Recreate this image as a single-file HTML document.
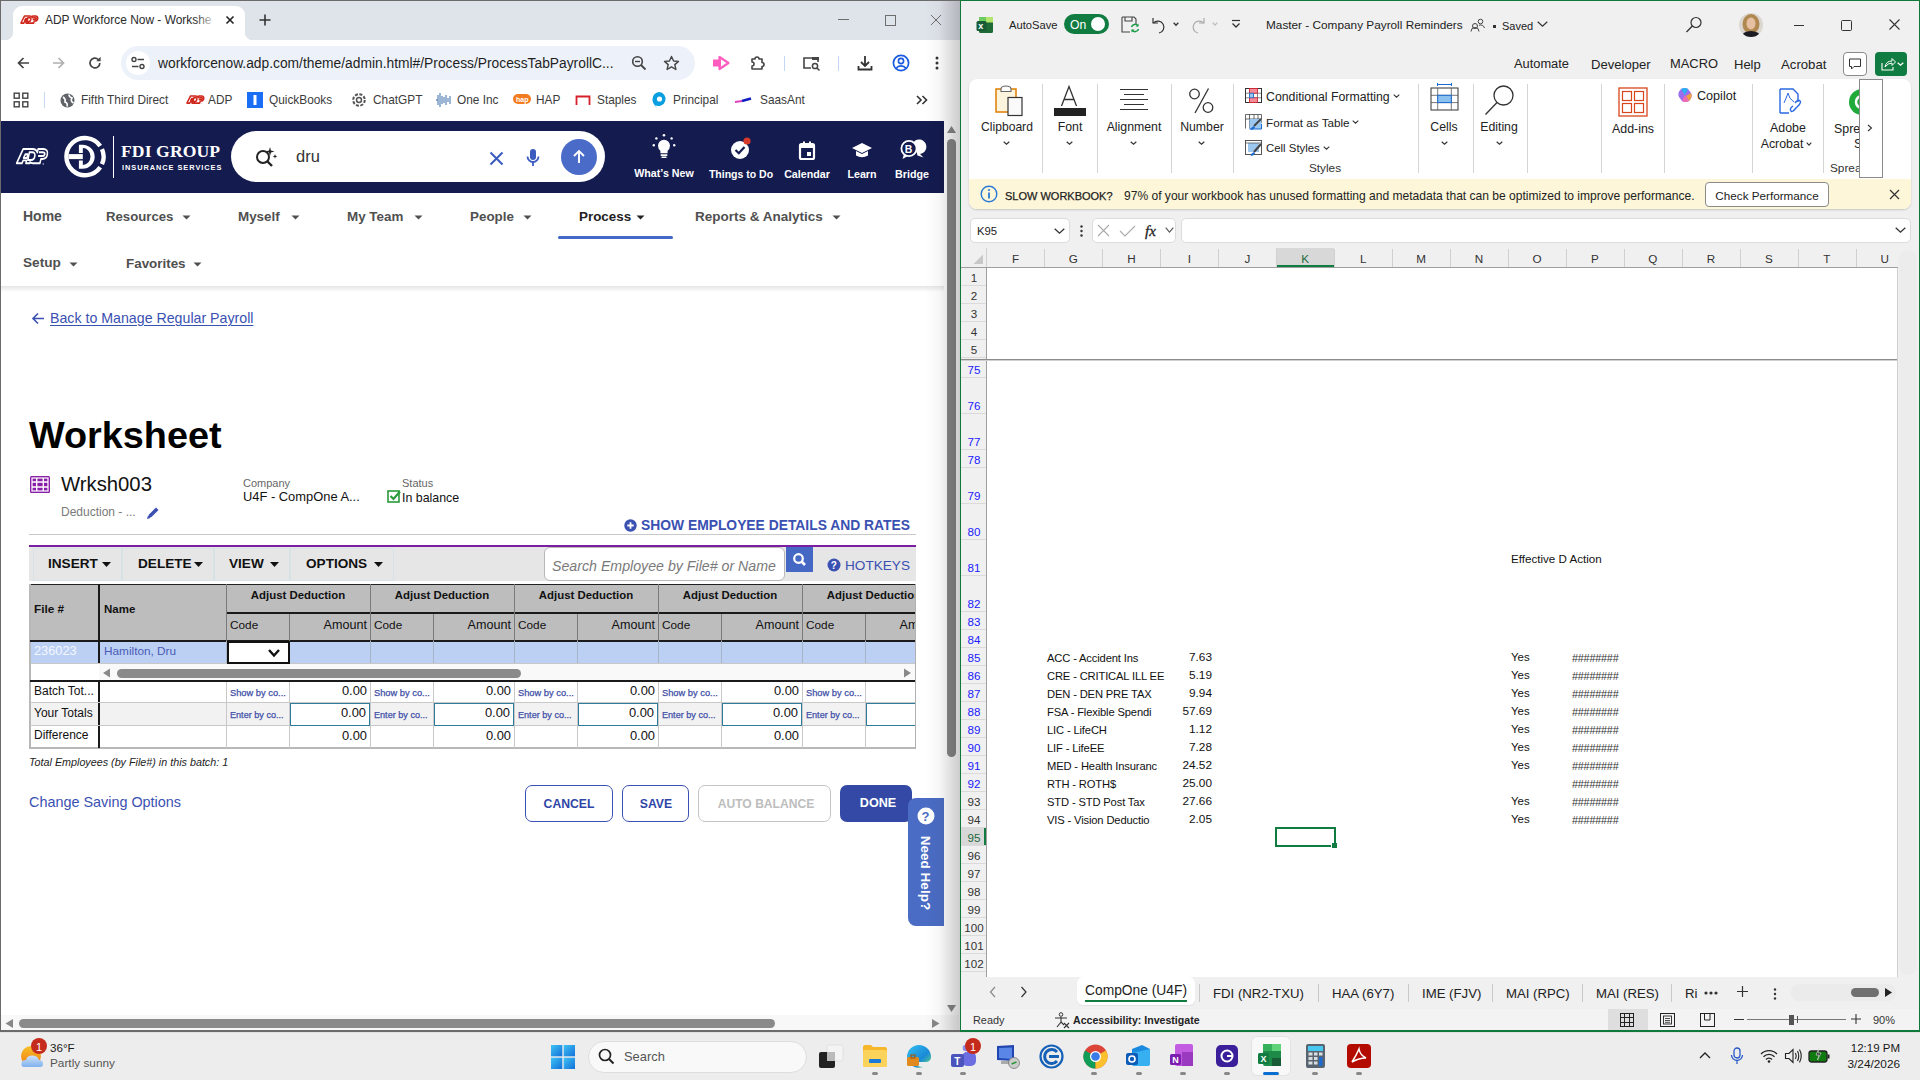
<!DOCTYPE html>
<html><head><meta charset="utf-8"><title>Screen</title>
<style>
html,body{margin:0;padding:0;width:1920px;height:1080px;overflow:hidden;background:#ededed;font-family:"Liberation Sans",sans-serif;}
.r{position:absolute;}
.t{position:absolute;white-space:nowrap;line-height:1;}
svg.r{overflow:visible;}
</style></head><body>
<div class="r" style="left:0px;top:0px;width:960px;height:1032px;background:#ffffff;"></div>
<div class="r" style="left:0px;top:0px;width:960px;height:40px;background:#dfe3ea;"></div>
<div class="r" style="left:13px;top:6px;width:232px;height:34px;background:#fff;border-radius:9px 9px 0 0"></div>
<div class="r" style="left:5px;top:32px;width:8px;height:8px;background:radial-gradient(circle at 0 0, transparent 8px, #fff 8.5px)"></div>
<div class="r" style="left:245px;top:32px;width:8px;height:8px;background:radial-gradient(circle at 100% 0, transparent 8px, #fff 8.5px)"></div>
<svg class="r" style="left:20px;top:15px;transform:scale(0.45,0.5);transform-origin:0 0" width="36" height="19" viewBox="0 0 36 19"><g stroke="#d0271d" stroke-width="3.2" fill="none" stroke-linejoin="round"><path d="M2 16.2 L10 2 H21.5 C24.8 2 26.6 3.6 27.2 5.6 L28.2 2 H34.5 C38.5 2 40 4 39.5 7.2 C39 10.4 36.6 12 33.2 12 H31.6 L30.4 16.2 H21.8 C19.6 16.2 18.8 15.7 18.3 15 L18 16.2 H13.3 L14 13.4 H10 L8.5 16.2 Z"/><path d="M10.5 11 L12.6 7.2 H15.6 L14.6 11 Z"/><path d="M17.6 5.2 H21 C23.6 5.2 24.6 6.8 24.2 9 C23.8 11.4 22.2 13 19.6 13 H15.6 Z"/><path d="M29.2 5.2 H33.6 C35.8 5.2 36.6 6 36.3 7.2 C36 8.4 35 9 33.4 9 H28.2"/></g><circle cx="34.4" cy="17" r="0.7" fill="#d0271d"/></svg>
<div class="t " style="left:45.0px;top:14.8px;font-size:11.95px;color:#2a2a2a;">ADP Workforce Now - Workshe</div>
<div class="r" style="left:195px;top:10px;width:22px;height:22px;background:linear-gradient(to right, rgba(255,255,255,0), #fff)"></div>
<svg class="r" style="left:224px;top:14px;" width="12" height="12" viewBox="0 0 12 12"><path d="M2.5 2.5 L9.5 9.5 M9.5 2.5 L2.5 9.5" stroke="#222" stroke-width="1.6"/></svg>
<svg class="r" style="left:258px;top:13px;" width="14" height="14" viewBox="0 0 14 14"><path d="M7 1.5 V12.5 M1.5 7 H12.5" stroke="#333" stroke-width="1.6"/></svg>
<div class="r" style="left:838px;top:19px;width:11px;height:1px;background:#6e6e6e;"></div>
<div class="r" style="left:885px;top:15px;width:9px;height:9px;border:1px solid #6e6e6e"></div>
<svg class="r" style="left:930px;top:14px;" width="12" height="12" viewBox="0 0 12 12"><path d="M1 1 L11 11 M11 1 L1 11" stroke="#6e6e6e" stroke-width="1"/></svg>
<div class="r" style="left:0px;top:40px;width:960px;height:40px;background:#ffffff;"></div>
<svg class="r" style="left:16px;top:56px;" width="14" height="14" viewBox="0 0 14 14"><path d="M13 7 H2.5 M7.5 2 L2.5 7 L7.5 12" stroke="#444" stroke-width="1.7" fill="none"/></svg>
<svg class="r" style="left:52px;top:56px;" width="14" height="14" viewBox="0 0 14 14"><path d="M1 7 H11.5 M6.5 2 L11.5 7 L6.5 12" stroke="#b0b0b0" stroke-width="1.7" fill="none"/></svg>
<svg class="r" style="left:88px;top:56px;" width="14" height="14" viewBox="0 0 14 14"><path d="M11.8 7 A4.9 4.9 0 1 1 10.3 3.5" stroke="#444" stroke-width="1.7" fill="none"/><path d="M12.6 0.8 V5.2 H8.2 Z" fill="#444"/></svg>
<div class="r" style="left:121px;top:46px;width:574px;height:34px;background:#edf2fa;border-radius:17px"></div>
<div class="r" style="left:126px;top:51px;width:24px;height:24px;background:#fff;border-radius:12px"></div>
<svg class="r" style="left:130px;top:55px;" width="16" height="16" viewBox="0 0 16 16"><circle cx="4" cy="4.5" r="2" stroke="#444" stroke-width="1.4" fill="none"/><path d="M7.5 4.5 H14" stroke="#444" stroke-width="1.5"/><circle cx="12" cy="11.5" r="2" stroke="#444" stroke-width="1.4" fill="none"/><path d="M2 11.5 H8.5" stroke="#444" stroke-width="1.5"/></svg>
<div class="t " style="left:158.0px;top:57.3px;font-size:13.8px;color:#1f1f1f;">workforcenow.adp.com/theme/admin.html#/Process/ProcessTabPayrollC...</div>
<svg class="r" style="left:631px;top:55px;" width="16" height="16" viewBox="0 0 16 16"><circle cx="6.5" cy="6.5" r="4.8" stroke="#444" stroke-width="1.6" fill="none"/><path d="M10 10 L14.5 14.5" stroke="#444" stroke-width="1.8"/><path d="M4 6.5 H9" stroke="#444" stroke-width="1.4"/></svg>
<svg class="r" style="left:663px;top:55px;" width="17" height="16" viewBox="0 0 17 16"><path d="M8.5 1.5 L10.6 6 L15.5 6.4 L11.8 9.6 L12.9 14.5 L8.5 11.9 L4.1 14.5 L5.2 9.6 L1.5 6.4 L6.4 6 Z" stroke="#444" stroke-width="1.4" fill="none" stroke-linejoin="round"/></svg>
<svg class="r" style="left:712px;top:55px;" width="18" height="16" viewBox="0 0 18 16"><rect x="1" y="4.5" width="8" height="7" fill="#ff5cc0"/><path d="M7.5 2 L16.5 8 L7.5 14 Z" stroke="#ff5cc0" stroke-width="2.2" fill="none" stroke-linejoin="round"/></svg>
<svg class="r" style="left:749px;top:55px;" width="17" height="17" viewBox="0 0 17 17"><path d="M3 4 H6 A2 2 0 0 1 10 4 H13 V7.5 A2 2 0 0 1 13 11.5 V14 H3 V11 A2 2 0 0 0 3 7 Z" stroke="#444" stroke-width="1.6" fill="none" stroke-linejoin="round"/></svg>
<div class="r" style="left:784px;top:56px;width:1px;height:15px;background:#c5d6f5;"></div>
<svg class="r" style="left:802px;top:55px;" width="19" height="17" viewBox="0 0 19 17"><path d="M9 13 H2 V3 H16 V7" stroke="#444" stroke-width="1.6" fill="none"/><rect x="10" y="2" width="7" height="3" fill="#444"/><circle cx="13" cy="11" r="2.6" stroke="#444" stroke-width="1.5" fill="none"/><path d="M15 13 L17.5 15.5" stroke="#444" stroke-width="1.6"/></svg>
<div class="r" style="left:838px;top:56px;width:1px;height:15px;background:#c5d6f5;"></div>
<svg class="r" style="left:856px;top:54px;" width="18" height="18" viewBox="0 0 18 18"><path d="M9 2 V11.5 M5 8 L9 12 L13 8" stroke="#333" stroke-width="1.8" fill="none"/><path d="M2.5 12 V15.5 H15.5 V12" stroke="#333" stroke-width="1.8" fill="none"/></svg>
<svg class="r" style="left:892px;top:54px;" width="18" height="18" viewBox="0 0 18 18"><circle cx="9" cy="9" r="7.6" stroke="#1a5ae0" stroke-width="1.7" fill="none"/><circle cx="9" cy="7" r="2.6" stroke="#1a5ae0" stroke-width="1.6" fill="none"/><path d="M4.2 14.2 A5.5 4.5 0 0 1 13.8 14.2" stroke="#1a5ae0" stroke-width="1.6" fill="none"/></svg>
<svg class="r" style="left:934px;top:55px;" width="6" height="16" viewBox="0 0 6 16"><circle cx="3" cy="3" r="1.5" fill="#333"/><circle cx="3" cy="8" r="1.5" fill="#333"/><circle cx="3" cy="13" r="1.5" fill="#333"/></svg>
<div class="r" style="left:0px;top:80px;width:960px;height:41px;background:#ffffff;"></div>
<svg class="r" style="left:13px;top:92px;" width="16" height="16" viewBox="0 0 16 16"><rect x="1.2" y="1.2" width="5" height="5" stroke="#444" stroke-width="1.4" fill="none"/><rect x="9.8" y="1.2" width="5" height="5" stroke="#444" stroke-width="1.4" fill="none"/><rect x="1.2" y="9.8" width="5" height="5" stroke="#444" stroke-width="1.4" fill="none"/><rect x="9.8" y="9.8" width="5" height="5" stroke="#444" stroke-width="1.4" fill="none"/></svg>
<div class="r" style="left:44px;top:92px;width:1px;height:16px;background:#c8d8f5;"></div>
<svg class="r" style="left:60px;top:93px;" width="15" height="15" viewBox="0 0 15 15"><circle cx="7.5" cy="7.5" r="7" fill="#5f6368"/><path d="M3 4 Q6 6 5 9 Q8 10 7 13.5 M9 1.5 Q9 4 12 5 Q10 8 13.5 10" stroke="#fff" stroke-width="1.6" fill="none"/></svg>
<div class="t " style="left:81.0px;top:94.9px;font-size:11.85px;color:#3c3c3c;">Fifth Third Direct</div>
<svg class="r" style="left:186px;top:95px;transform:scale(0.45,0.5);transform-origin:0 0" width="36" height="19" viewBox="0 0 36 19"><g stroke="#d0271d" stroke-width="3.2" fill="none" stroke-linejoin="round"><path d="M2 16.2 L10 2 H21.5 C24.8 2 26.6 3.6 27.2 5.6 L28.2 2 H34.5 C38.5 2 40 4 39.5 7.2 C39 10.4 36.6 12 33.2 12 H31.6 L30.4 16.2 H21.8 C19.6 16.2 18.8 15.7 18.3 15 L18 16.2 H13.3 L14 13.4 H10 L8.5 16.2 Z"/><path d="M10.5 11 L12.6 7.2 H15.6 L14.6 11 Z"/><path d="M17.6 5.2 H21 C23.6 5.2 24.6 6.8 24.2 9 C23.8 11.4 22.2 13 19.6 13 H15.6 Z"/><path d="M29.2 5.2 H33.6 C35.8 5.2 36.6 6 36.3 7.2 C36 8.4 35 9 33.4 9 H28.2"/></g><circle cx="34.4" cy="17" r="0.7" fill="#d0271d"/></svg>
<div class="t " style="left:208.0px;top:94.9px;font-size:11.85px;color:#3c3c3c;">ADP</div>
<svg class="r" style="left:247px;top:92px;" width="16" height="16" viewBox="0 0 16 16"><rect x="0" y="0" width="16" height="16" fill="#1a6ef5"/><rect x="6.5" y="3" width="3" height="10" fill="#fff"/></svg>
<div class="t " style="left:269.0px;top:94.9px;font-size:11.85px;color:#3c3c3c;">QuickBooks</div>
<svg class="r" style="left:352px;top:93px;" width="14" height="14" viewBox="0 0 14 14"><circle cx="7" cy="7" r="5.8" stroke="#555" stroke-width="2" fill="none" stroke-dasharray="3 1.5"/><circle cx="7" cy="7" r="2.5" stroke="#555" stroke-width="1.5" fill="none"/></svg>
<div class="t " style="left:373.0px;top:94.9px;font-size:11.85px;color:#3c3c3c;">ChatGPT</div>
<svg class="r" style="left:435px;top:91px;" width="16" height="18" viewBox="0 0 16 18"><path d="M1 9 H3 M3 4 V14 M5 2 V16 M7 5 V13 M9 6 V12 M11 4 V14 M13 7 V11 M15 5 V13" stroke="#6a8fc0" stroke-width="1.3"/></svg>
<div class="t " style="left:457.0px;top:94.9px;font-size:11.85px;color:#3c3c3c;">One Inc</div>
<svg class="r" style="left:513px;top:94px;" width="18" height="10" viewBox="0 0 18 10"><rect x="0" y="0" width="18" height="10" rx="5" fill="#f47c20"/><text x="3" y="8" font-family="Liberation Sans" font-weight="700" font-size="7" fill="#fff">hap</text></svg>
<div class="t " style="left:536.0px;top:94.9px;font-size:11.85px;color:#3c3c3c;">HAP</div>
<svg class="r" style="left:575px;top:95px;" width="16" height="10" viewBox="0 0 16 10"><path d="M1.5 10 V1.5 H14.5 V10" stroke="#d6202a" stroke-width="1.8" fill="none"/></svg>
<div class="t " style="left:597.0px;top:94.9px;font-size:11.85px;color:#3c3c3c;">Staples</div>
<svg class="r" style="left:651px;top:91px;" width="16" height="18" viewBox="0 0 16 18"><path d="M8 1 A7 7 0 1 1 4 14 L6 17 Q1 12 1.5 8 A7 7 0 0 1 8 1 Z" fill="#0a9fe0"/><circle cx="8.5" cy="8" r="2.6" fill="#fff"/></svg>
<div class="t " style="left:673.0px;top:94.9px;font-size:11.85px;color:#3c3c3c;">Principal</div>
<svg class="r" style="left:734px;top:95px;" width="18" height="10" viewBox="0 0 18 10"><path d="M1 7 L8 6" stroke="#e040c0" stroke-width="2.2"/><path d="M8 6 L17 3.5" stroke="#1020c0" stroke-width="2.6"/></svg>
<div class="t " style="left:760.0px;top:94.9px;font-size:11.85px;color:#3c3c3c;">SaasAnt</div>
<svg class="r" style="left:915px;top:94px;" width="14" height="12" viewBox="0 0 14 12"><path d="M2 2 L6 6 L2 10 M7.5 2 L11.5 6 L7.5 10" stroke="#333" stroke-width="1.6" fill="none"/></svg>
<div class="r" style="left:1px;top:121px;width:943px;height:72px;background:#131b4f;"></div>
<svg class="r" style="left:15px;top:147px;transform:scale(0.82,1.0);transform-origin:0 0" width="36" height="19" viewBox="0 0 36 19"><g stroke="#fff" stroke-width="1.9" fill="none" stroke-linejoin="round"><path d="M2 16.2 L10 2 H21.5 C24.8 2 26.6 3.6 27.2 5.6 L28.2 2 H34.5 C38.5 2 40 4 39.5 7.2 C39 10.4 36.6 12 33.2 12 H31.6 L30.4 16.2 H21.8 C19.6 16.2 18.8 15.7 18.3 15 L18 16.2 H13.3 L14 13.4 H10 L8.5 16.2 Z"/><path d="M10.5 11 L12.6 7.2 H15.6 L14.6 11 Z"/><path d="M17.6 5.2 H21 C23.6 5.2 24.6 6.8 24.2 9 C23.8 11.4 22.2 13 19.6 13 H15.6 Z"/><path d="M29.2 5.2 H33.6 C35.8 5.2 36.6 6 36.3 7.2 C36 8.4 35 9 33.4 9 H28.2"/></g><circle cx="34.4" cy="17" r="0.7" fill="#fff"/></svg>
<svg class="r" style="left:62px;top:134px;" width="48" height="46" viewBox="0 0 48 46"><path d="M38.24 11.93 A18.6 18.6 0 1 0 38.24 33.27" stroke="#fff" stroke-width="4.4" fill="none"/><path d="M39.99 15.03 A18.6 18.6 0 0 1 39.99 30.17" stroke="#fff" stroke-width="4.4" fill="none"/><path fill-rule="evenodd" fill="#fff" d="M16.9 10.7 H20.5 A12.2 12.05 0 0 1 20.5 34.8 H16.9 V26.4 H20.8 V31 A7.7 8.5 0 0 0 20.8 14 V18.9 H16.9 Z"/><rect x="6.6" y="20.1" width="14.2" height="5" fill="#fff"/></svg>
<div class="r" style="left:113px;top:136px;width:1px;height:42px;background:#ffffff;"></div>
<div class="t " style="left:121.0px;top:142.5px;font-size:17.6px;color:#fff;font-weight:700;font-family:'Liberation Serif',serif;letter-spacing:0.1px;">FDI GROUP</div>
<div class="t " style="left:122.0px;top:164.2px;font-size:7.4px;color:#fff;font-weight:700;letter-spacing:0.95px;">INSURANCE SERVICES</div>
<div class="r" style="left:231px;top:131px;width:374px;height:51px;background:#fff;border-radius:26px"></div>
<svg class="r" style="left:254px;top:145px;" width="24" height="24" viewBox="0 0 24 24"><circle cx="9" cy="12" r="6" stroke="#222" stroke-width="2" fill="none"/><path d="M13.5 16.5 L18 21" stroke="#222" stroke-width="2.4"/><path d="M16 2 L17 5.5 L20.5 6.5 L17 7.5 L16 11 L15 7.5 L11.5 6.5 L15 5.5 Z" fill="#222"/><path d="M21 9 L21.6 10.8 L23.4 11.4 L21.6 12 L21 13.8 L20.4 12 L18.6 11.4 L20.4 10.8 Z" fill="#222"/></svg>
<div class="t " style="left:296.0px;top:148.0px;font-size:16.5px;color:#333;">dru</div>
<svg class="r" style="left:489px;top:151px;" width="15" height="15" viewBox="0 0 15 15"><path d="M1.5 1.5 L13.5 13.5 M13.5 1.5 L1.5 13.5" stroke="#3b5bbf" stroke-width="2"/></svg>
<svg class="r" style="left:526px;top:148px;" width="14" height="20" viewBox="0 0 14 20"><rect x="4" y="1" width="6" height="11" rx="3" fill="#3b5bbf"/><path d="M1.5 8.5 A5.5 5.5 0 0 0 12.5 8.5" stroke="#3b5bbf" stroke-width="1.8" fill="none"/><path d="M7 14 V18" stroke="#3b5bbf" stroke-width="1.8"/></svg>
<div class="r" style="left:561px;top:139px;width:36px;height:36px;background:#4a6bc8;border-radius:18px"></div>
<svg class="r" style="left:570px;top:148px;" width="18" height="18" viewBox="0 0 18 18"><path d="M9 15 V3.5 M4 8 L9 3 L14 8" stroke="#fff" stroke-width="1.9" fill="none"/></svg>
<svg class="r" style="left:651px;top:133px;" width="26" height="26" viewBox="0 0 26 26"><path d="M7 12.8 A6 6 0 1 1 19 12.8 Q19 15.8 16.6 17.8 V20.2 H9.4 V17.8 Q7 15.8 7 12.8 Z" fill="#fff"/><rect x="9.6" y="21.2" width="6.8" height="1.8" rx="0.6" fill="#fff"/><rect x="10.4" y="23.6" width="5.2" height="1.5" rx="0.7" fill="#fff"/><circle cx="13" cy="2.3" r="1.3" fill="#fff"/><circle cx="5.4" cy="5.4" r="1.2" fill="#fff"/><circle cx="20.6" cy="5.4" r="1.2" fill="#fff"/><circle cx="2.8" cy="12.3" r="1.2" fill="#fff"/><circle cx="23.2" cy="12.3" r="1.2" fill="#fff"/></svg>
<div class="t " style="left:364.0px;width:600px;text-align:center;top:167.9px;font-size:10.7px;color:#fff;font-weight:700;">What’s New</div>
<svg class="r" style="left:728px;top:136px;" width="26" height="26" viewBox="0 0 26 26"><circle cx="12" cy="14" r="9" fill="#fff"/><path d="M7.5 14 L10.8 17.2 L16.5 11" stroke="#131b4f" stroke-width="2.2" fill="none"/><circle cx="19" cy="5" r="3.6" fill="#d63a2a" stroke="#131b4f" stroke-width="0"/></svg>
<div class="t " style="left:441.0px;width:600px;text-align:center;top:169.1px;font-size:10.5px;color:#fff;font-weight:700;">Things to Do</div>
<svg class="r" style="left:797px;top:141px;" width="20" height="20" viewBox="0 0 20 20"><rect x="3" y="3" width="14" height="15" rx="1.5" stroke="#fff" stroke-width="2.2" fill="none"/><rect x="3" y="3" width="14" height="4" fill="#fff"/><rect x="6" y="0.5" width="2" height="4" fill="#fff"/><rect x="12" y="0.5" width="2" height="4" fill="#fff"/><rect x="10" y="11" width="4" height="4" fill="#fff"/></svg>
<div class="t " style="left:507.0px;width:600px;text-align:center;top:168.9px;font-size:10.7px;color:#fff;font-weight:700;">Calendar</div>
<svg class="r" style="left:850px;top:140px;" width="24" height="20" viewBox="0 0 24 20"><path d="M12 3 L22 8 L12 13 L2 8 Z" fill="#fff"/><path d="M6 11 V15.5 Q12 19 18 15.5 V11 L12 14 Z" fill="#fff"/></svg>
<div class="t " style="left:562.0px;width:600px;text-align:center;top:168.9px;font-size:10.7px;color:#fff;font-weight:700;">Learn</div>
<svg class="r" style="left:899px;top:139px;" width="26" height="22" viewBox="0 0 26 22"><path d="M15 2.5 A7.3 7.3 0 1 1 21 15 L24.5 18.5 L18.5 16.5 Z" fill="#fff"/><circle cx="10" cy="9.5" r="7.6" stroke="#fff" stroke-width="1.8" fill="#131b4f"/><path d="M5 15 L3.5 20 L9 17" fill="#fff"/><text x="5.8" y="13.5" font-family="Liberation Sans" font-weight="700" font-size="10.5" fill="#fff">B</text></svg>
<div class="t " style="left:612.0px;width:600px;text-align:center;top:168.9px;font-size:10.7px;color:#fff;font-weight:700;">Bridge</div>
<div class="t " style="left:23.0px;top:209.1px;font-size:14.0px;color:#505050;font-weight:700;">Home</div>
<div class="t " style="left:106.0px;top:209.8px;font-size:13.2px;color:#505050;font-weight:700;">Resources</div>
<svg class="r" style="left:182px;top:215px;" width="9" height="5" viewBox="0 0 9 5"><path d="M0.5 0.5 H8.5 L4.5 4.5 Z" fill="#505050"/></svg>
<div class="t " style="left:238.0px;top:209.6px;font-size:13.4px;color:#505050;font-weight:700;">Myself</div>
<svg class="r" style="left:291px;top:215px;" width="9" height="5" viewBox="0 0 9 5"><path d="M0.5 0.5 H8.5 L4.5 4.5 Z" fill="#505050"/></svg>
<div class="t " style="left:347.0px;top:209.6px;font-size:13.4px;color:#505050;font-weight:700;">My Team</div>
<svg class="r" style="left:414px;top:215px;" width="9" height="5" viewBox="0 0 9 5"><path d="M0.5 0.5 H8.5 L4.5 4.5 Z" fill="#505050"/></svg>
<div class="t " style="left:470.0px;top:209.6px;font-size:13.4px;color:#505050;font-weight:700;">People</div>
<svg class="r" style="left:523px;top:215px;" width="9" height="5" viewBox="0 0 9 5"><path d="M0.5 0.5 H8.5 L4.5 4.5 Z" fill="#505050"/></svg>
<div class="t " style="left:579.0px;top:209.6px;font-size:13.4px;color:#222;font-weight:700;">Process</div>
<svg class="r" style="left:636px;top:215px;" width="9" height="5" viewBox="0 0 9 5"><path d="M0.5 0.5 H8.5 L4.5 4.5 Z" fill="#222"/></svg>
<div class="t " style="left:695.0px;top:209.5px;font-size:13.5px;color:#505050;font-weight:700;">Reports &amp; Analytics</div>
<svg class="r" style="left:832px;top:215px;" width="9" height="5" viewBox="0 0 9 5"><path d="M0.5 0.5 H8.5 L4.5 4.5 Z" fill="#505050"/></svg>
<div class="r" style="left:558px;top:236px;width:115px;height:3px;background:#4368c8;border-radius:2px"></div>
<div class="t " style="left:23.0px;top:256.4px;font-size:13.6px;color:#505050;font-weight:700;">Setup</div>
<svg class="r" style="left:69px;top:262px;" width="9" height="5" viewBox="0 0 9 5"><path d="M0.5 0.5 H8.5 L4.5 4.5 Z" fill="#505050"/></svg>
<div class="t " style="left:126.0px;top:256.6px;font-size:13.4px;color:#505050;font-weight:700;">Favorites</div>
<svg class="r" style="left:193px;top:262px;" width="9" height="5" viewBox="0 0 9 5"><path d="M0.5 0.5 H8.5 L4.5 4.5 Z" fill="#505050"/></svg>
<div class="r" style="left:1px;top:286px;width:943px;height:6px;background:linear-gradient(rgba(0,0,0,0.10), rgba(0,0,0,0))"></div>
<svg class="r" style="left:31px;top:312px;" width="14" height="13" viewBox="0 0 14 13"><path d="M13 6.5 H2 M7 1.5 L2 6.5 L7 11.5" stroke="#3a51b2" stroke-width="1.6" fill="none"/></svg>
<div class="t " style="left:50.0px;top:310.9px;font-size:14.2px;color:#3a51b2;text-decoration:underline;text-underline-offset:2px;text-decoration-thickness:1px;">Back to Manage Regular Payroll</div>
<div class="t " style="left:29.0px;top:416.9px;font-size:37.8px;color:#000;font-weight:700;">Worksheet</div>
<svg class="r" style="left:29px;top:475px;" width="22" height="19" viewBox="0 0 22 19"><rect x="1" y="1" width="20" height="17" rx="1.5" fill="#8a1fa8"/><path d="M3 7 H19 M3 12 H19 M7.7 3 V16 M14.3 3 V16" stroke="#fff" stroke-width="1.4"/><rect x="3" y="3" width="16" height="13" stroke="#fff" stroke-width="1.2" fill="none"/></svg>
<div class="t " style="left:61.0px;top:473.7px;font-size:20.3px;color:#111;">Wrksh003</div>
<div class="t " style="left:61.0px;top:505.8px;font-size:12.0px;color:#7a7a7a;">Deduction - ...</div>
<svg class="r" style="left:146px;top:506px;" width="14" height="14" viewBox="0 0 14 14"><path d="M2 12 L3 8.5 L10 1.5 L12.5 4 L5.5 11 Z" fill="#3a51b2"/><path d="M1 13 L2 9.5 L4.5 12 Z" fill="#3a51b2"/></svg>
<div class="t " style="left:243.0px;top:477.6px;font-size:11.0px;color:#666;">Company</div>
<div class="t " style="left:243.0px;top:491.0px;font-size:12.9px;color:#111;">U4F - CompOne A...</div>
<div class="t " style="left:402.0px;top:477.6px;font-size:11.0px;color:#666;">Status</div>
<svg class="r" style="left:387px;top:489px;" width="14" height="14" viewBox="0 0 14 14"><rect x="1" y="2" width="11" height="11" stroke="#2a9a3a" stroke-width="1.6" fill="none"/><path d="M3.5 7 L6.5 10 L13 2.5" stroke="#2a9a3a" stroke-width="2.2" fill="none"/></svg>
<div class="t " style="left:402.0px;top:491.5px;font-size:12.4px;color:#111;">In balance</div>
<svg class="r" style="left:624px;top:519px;" width="13" height="13" viewBox="0 0 13 13"><circle cx="6.5" cy="6.5" r="6.2" fill="#3a51b2"/><path d="M6.5 3.3 V9.7 M3.3 6.5 H9.7" stroke="#fff" stroke-width="1.8"/></svg>
<div class="t " style="left:641.0px;top:519.2px;font-size:13.85px;color:#3a51b2;font-weight:700;">SHOW EMPLOYEE DETAILS AND RATES</div>
<div class="r" style="left:29px;top:534px;width:887px;height:1px;background:#c8c8c8;"></div>
<div class="r" style="left:29px;top:545px;width:887px;height:2px;background:#7b1fa2;"></div>
<div class="r" style="left:29px;top:547px;width:887px;height:34px;background:#e6e6e6;"></div>
<div class="r" style="left:33px;top:548px;width:87px;height:31px;border:1px solid #d6e2e6"></div>
<div class="r" style="left:122px;top:548px;width:90px;height:31px;border:1px solid #d6e2e6"></div>
<div class="r" style="left:214px;top:548px;width:74px;height:31px;border:1px solid #d6e2e6"></div>
<div class="r" style="left:290px;top:548px;width:102px;height:31px;border:1px solid #d6e2e6"></div>
<div class="t " style="left:48.0px;top:557.4px;font-size:13.6px;color:#111;font-weight:700;">INSERT</div>
<svg class="r" style="left:102px;top:562px;" width="9" height="5" viewBox="0 0 9 5"><path d="M0 0 H9 L4.5 5 Z" fill="#111"/></svg>
<div class="t " style="left:138.0px;top:557.4px;font-size:13.6px;color:#111;font-weight:700;">DELETE</div>
<svg class="r" style="left:194px;top:562px;" width="9" height="5" viewBox="0 0 9 5"><path d="M0 0 H9 L4.5 5 Z" fill="#111"/></svg>
<div class="t " style="left:229.0px;top:557.4px;font-size:13.6px;color:#111;font-weight:700;">VIEW</div>
<svg class="r" style="left:270px;top:562px;" width="9" height="5" viewBox="0 0 9 5"><path d="M0 0 H9 L4.5 5 Z" fill="#111"/></svg>
<div class="t " style="left:306.0px;top:557.4px;font-size:13.6px;color:#111;font-weight:700;">OPTIONS</div>
<svg class="r" style="left:374px;top:562px;" width="9" height="5" viewBox="0 0 9 5"><path d="M0 0 H9 L4.5 5 Z" fill="#111"/></svg>
<div class="r" style="left:544px;top:547px;width:241px;height:34px;background:#fff;border:1px solid #b8b8b8;border-radius:6px;box-sizing:border-box"></div>
<div class="t " style="left:552.0px;top:558.9px;font-size:14.2px;color:#7a7a7a;font-style:italic;">Search Employee by File# or Name</div>
<div class="r" style="left:786px;top:547px;width:27px;height:25px;background:#4668c5;"></div>
<svg class="r" style="left:792px;top:552px;" width="16" height="16" viewBox="0 0 16 16"><circle cx="6.5" cy="6.5" r="4.3" stroke="#fff" stroke-width="2.2" fill="none"/><path d="M9.5 9.5 L13 13" stroke="#fff" stroke-width="2.6"/></svg>
<svg class="r" style="left:827px;top:558px;" width="14" height="14" viewBox="0 0 14 14"><circle cx="7" cy="7" r="6.5" fill="#3a51b2"/><text x="3.8" y="11" font-family="Liberation Sans" font-weight="700" font-size="10" fill="#fff">?</text></svg>
<div class="t " style="left:845.0px;top:559.4px;font-size:13.6px;color:#3a51b2;">HOTKEYS</div>
<div style="position:absolute;left:0;top:0;width:916px;height:1080px;overflow:hidden">
<div class="r" style="left:30px;top:584px;width:886px;height:57px;background:#bdbdbd;"></div>
<div class="r" style="left:30px;top:584px;width:886px;height:1px;background:#222;"></div>
<div class="r" style="left:30px;top:641px;width:886px;height:23px;background:#bcd0f4;"></div>
<div class="r" style="left:30px;top:664px;width:886px;height:17px;background:#ffffff;"></div>
<div class="r" style="left:99px;top:664px;width:817px;height:17px;background:#f9f9f9;"></div>
<div class="r" style="left:30px;top:682px;width:886px;height:21px;background:#ffffff;"></div>
<div class="r" style="left:30px;top:703px;width:886px;height:23px;background:#f2f2f2;"></div>
<div class="r" style="left:30px;top:726px;width:886px;height:22px;background:#ffffff;"></div>
<div class="r" style="left:29px;top:584px;width:2px;height:165px;background:#b8b8b8;"></div>
<div class="r" style="left:29px;top:747px;width:887px;height:2px;background:#b8b8b8;"></div>
<div class="r" style="left:98px;top:584px;width:2px;height:80px;background:#1a1a1a;"></div>
<div class="r" style="left:98px;top:682px;width:2px;height:66px;background:#1a1a1a;"></div>
<div class="r" style="left:226px;top:584px;width:1px;height:57px;background:#8a8a8a;"></div>
<div class="r" style="left:226px;top:612px;width:690px;height:2px;background:#1a1a1a;"></div>
<div class="r" style="left:30px;top:640px;width:886px;height:2px;background:#1a1a1a;"></div>
<div class="r" style="left:30px;top:680px;width:886px;height:2px;background:#1a1a1a;"></div>
<div class="r" style="left:30px;top:702px;width:886px;height:1px;background:#c8c8c8;"></div>
<div class="r" style="left:30px;top:725px;width:886px;height:1px;background:#c8c8c8;"></div>
<div class="r" style="left:30px;top:663px;width:886px;height:1px;background:#c8c8c8;"></div>
<div class="r" style="left:226px;top:584px;width:1px;height:57px;background:#7a7a7a;"></div>
<div class="r" style="left:289px;top:614px;width:1px;height:27px;background:#7a7a7a;"></div>
<div class="r" style="left:226px;top:641px;width:1px;height:22px;background:#a8b4c8;"></div>
<div class="r" style="left:289px;top:641px;width:1px;height:22px;background:#a8b4c8;"></div>
<div class="r" style="left:226px;top:682px;width:1px;height:66px;background:#c8c8c8;"></div>
<div class="r" style="left:289px;top:682px;width:1px;height:66px;background:#c8c8c8;"></div>
<div class="t " style="left:-2.0px;width:600px;text-align:center;top:590.3px;font-size:11.4px;color:#111;font-weight:700;">Adjust Deduction</div>
<div class="t " style="left:230.0px;top:620.0px;font-size:11.8px;color:#111;">Code</div>
<div class="t " style="left:-233.0px;width:600px;text-align:right;top:619.3px;font-size:12.6px;color:#111;">Amount</div>
<div class="t " style="left:230.0px;top:688.6px;font-size:9.3px;color:#4150a8;-webkit-text-stroke:0.25px #4150a8;">Show by co...</div>
<div class="t " style="left:230.0px;top:711.3px;font-size:9.1px;color:#4150a8;-webkit-text-stroke:0.25px #4150a8;">Enter by co...</div>
<div class="t " style="left:-233.0px;width:600px;text-align:right;top:685.0px;font-size:12.9px;color:#111;">0.00</div>
<div class="t " style="left:-233.0px;width:600px;text-align:right;top:730.0px;font-size:12.9px;color:#111;">0.00</div>
<div class="r" style="left:290px;top:703px;width:80px;height:23px;border:1.5px solid #2f7d9a;box-sizing:border-box;background:#fff"></div>
<div class="t " style="left:-234.0px;width:600px;text-align:right;top:706.5px;font-size:12.9px;color:#111;">0.00</div>
<div class="r" style="left:370px;top:584px;width:1px;height:57px;background:#7a7a7a;"></div>
<div class="r" style="left:433px;top:614px;width:1px;height:27px;background:#7a7a7a;"></div>
<div class="r" style="left:370px;top:641px;width:1px;height:22px;background:#a8b4c8;"></div>
<div class="r" style="left:433px;top:641px;width:1px;height:22px;background:#a8b4c8;"></div>
<div class="r" style="left:370px;top:682px;width:1px;height:66px;background:#c8c8c8;"></div>
<div class="r" style="left:433px;top:682px;width:1px;height:66px;background:#c8c8c8;"></div>
<div class="t " style="left:142.0px;width:600px;text-align:center;top:590.3px;font-size:11.4px;color:#111;font-weight:700;">Adjust Deduction</div>
<div class="t " style="left:374.0px;top:620.0px;font-size:11.8px;color:#111;">Code</div>
<div class="t " style="left:-89.0px;width:600px;text-align:right;top:619.3px;font-size:12.6px;color:#111;">Amount</div>
<div class="t " style="left:374.0px;top:688.6px;font-size:9.3px;color:#4150a8;-webkit-text-stroke:0.25px #4150a8;">Show by co...</div>
<div class="t " style="left:374.0px;top:711.3px;font-size:9.1px;color:#4150a8;-webkit-text-stroke:0.25px #4150a8;">Enter by co...</div>
<div class="t " style="left:-89.0px;width:600px;text-align:right;top:685.0px;font-size:12.9px;color:#111;">0.00</div>
<div class="t " style="left:-89.0px;width:600px;text-align:right;top:730.0px;font-size:12.9px;color:#111;">0.00</div>
<div class="r" style="left:434px;top:703px;width:80px;height:23px;border:1.5px solid #2f7d9a;box-sizing:border-box;background:#fff"></div>
<div class="t " style="left:-90.0px;width:600px;text-align:right;top:706.5px;font-size:12.9px;color:#111;">0.00</div>
<div class="r" style="left:514px;top:584px;width:1px;height:57px;background:#7a7a7a;"></div>
<div class="r" style="left:577px;top:614px;width:1px;height:27px;background:#7a7a7a;"></div>
<div class="r" style="left:514px;top:641px;width:1px;height:22px;background:#a8b4c8;"></div>
<div class="r" style="left:577px;top:641px;width:1px;height:22px;background:#a8b4c8;"></div>
<div class="r" style="left:514px;top:682px;width:1px;height:66px;background:#c8c8c8;"></div>
<div class="r" style="left:577px;top:682px;width:1px;height:66px;background:#c8c8c8;"></div>
<div class="t " style="left:286.0px;width:600px;text-align:center;top:590.3px;font-size:11.4px;color:#111;font-weight:700;">Adjust Deduction</div>
<div class="t " style="left:518.0px;top:620.0px;font-size:11.8px;color:#111;">Code</div>
<div class="t " style="left:55.0px;width:600px;text-align:right;top:619.3px;font-size:12.6px;color:#111;">Amount</div>
<div class="t " style="left:518.0px;top:688.6px;font-size:9.3px;color:#4150a8;-webkit-text-stroke:0.25px #4150a8;">Show by co...</div>
<div class="t " style="left:518.0px;top:711.3px;font-size:9.1px;color:#4150a8;-webkit-text-stroke:0.25px #4150a8;">Enter by co...</div>
<div class="t " style="left:55.0px;width:600px;text-align:right;top:685.0px;font-size:12.9px;color:#111;">0.00</div>
<div class="t " style="left:55.0px;width:600px;text-align:right;top:730.0px;font-size:12.9px;color:#111;">0.00</div>
<div class="r" style="left:578px;top:703px;width:80px;height:23px;border:1.5px solid #2f7d9a;box-sizing:border-box;background:#fff"></div>
<div class="t " style="left:54.0px;width:600px;text-align:right;top:706.5px;font-size:12.9px;color:#111;">0.00</div>
<div class="r" style="left:658px;top:584px;width:1px;height:57px;background:#7a7a7a;"></div>
<div class="r" style="left:721px;top:614px;width:1px;height:27px;background:#7a7a7a;"></div>
<div class="r" style="left:658px;top:641px;width:1px;height:22px;background:#a8b4c8;"></div>
<div class="r" style="left:721px;top:641px;width:1px;height:22px;background:#a8b4c8;"></div>
<div class="r" style="left:658px;top:682px;width:1px;height:66px;background:#c8c8c8;"></div>
<div class="r" style="left:721px;top:682px;width:1px;height:66px;background:#c8c8c8;"></div>
<div class="t " style="left:430.0px;width:600px;text-align:center;top:590.3px;font-size:11.4px;color:#111;font-weight:700;">Adjust Deduction</div>
<div class="t " style="left:662.0px;top:620.0px;font-size:11.8px;color:#111;">Code</div>
<div class="t " style="left:199.0px;width:600px;text-align:right;top:619.3px;font-size:12.6px;color:#111;">Amount</div>
<div class="t " style="left:662.0px;top:688.6px;font-size:9.3px;color:#4150a8;-webkit-text-stroke:0.25px #4150a8;">Show by co...</div>
<div class="t " style="left:662.0px;top:711.3px;font-size:9.1px;color:#4150a8;-webkit-text-stroke:0.25px #4150a8;">Enter by co...</div>
<div class="t " style="left:199.0px;width:600px;text-align:right;top:685.0px;font-size:12.9px;color:#111;">0.00</div>
<div class="t " style="left:199.0px;width:600px;text-align:right;top:730.0px;font-size:12.9px;color:#111;">0.00</div>
<div class="r" style="left:722px;top:703px;width:80px;height:23px;border:1.5px solid #2f7d9a;box-sizing:border-box;background:#fff"></div>
<div class="t " style="left:198.0px;width:600px;text-align:right;top:706.5px;font-size:12.9px;color:#111;">0.00</div>
<div class="r" style="left:802px;top:584px;width:1px;height:57px;background:#7a7a7a;"></div>
<div class="r" style="left:865px;top:614px;width:1px;height:27px;background:#7a7a7a;"></div>
<div class="r" style="left:802px;top:641px;width:1px;height:22px;background:#a8b4c8;"></div>
<div class="r" style="left:865px;top:641px;width:1px;height:22px;background:#a8b4c8;"></div>
<div class="r" style="left:802px;top:682px;width:1px;height:66px;background:#c8c8c8;"></div>
<div class="r" style="left:865px;top:682px;width:1px;height:66px;background:#c8c8c8;"></div>
<div class="t " style="left:574.0px;width:600px;text-align:center;top:590.3px;font-size:11.4px;color:#111;font-weight:700;">Adjust Deduction</div>
<div class="t " style="left:806.0px;top:620.0px;font-size:11.8px;color:#111;">Code</div>
<div class="t " style="left:343.0px;width:600px;text-align:right;top:619.3px;font-size:12.6px;color:#111;">Amount</div>
<div class="t " style="left:806.0px;top:688.6px;font-size:9.3px;color:#4150a8;-webkit-text-stroke:0.25px #4150a8;">Show by co...</div>
<div class="t " style="left:806.0px;top:711.3px;font-size:9.1px;color:#4150a8;-webkit-text-stroke:0.25px #4150a8;">Enter by co...</div>
<div class="r" style="left:866px;top:703px;width:80px;height:23px;border:1.5px solid #2f7d9a;box-sizing:border-box;background:#fff"></div>
<div class="t " style="left:34.0px;top:604.0px;font-size:11.8px;color:#111;font-weight:700;">File #</div>
<div class="t " style="left:104.0px;top:604.2px;font-size:11.5px;color:#111;font-weight:700;">Name</div>
<div class="t " style="left:34.0px;top:644.6px;font-size:12.8px;color:#f4f7ff;">236023</div>
<div class="t " style="left:104.0px;top:645.5px;font-size:11.8px;color:#4a5cb6;">Hamilton, Dru</div>
<div class="r" style="left:227px;top:641px;width:63px;height:23px;background:#fff;border:2px solid #111;box-sizing:border-box"></div>
<svg class="r" style="left:267px;top:648px;" width="14" height="10" viewBox="0 0 14 10"><path d="M2 2 L7 7.5 L12 2" stroke="#111" stroke-width="2.4" fill="none"/></svg>
<svg class="r" style="left:102px;top:668px;" width="9" height="10" viewBox="0 0 9 10"><path d="M8 0.5 V9.5 L1 5 Z" fill="#888"/></svg>
<div class="r" style="left:117px;top:669px;width:404px;height:9px;background:#8a8a8a;border-radius:5px"></div>
<svg class="r" style="left:903px;top:668px;" width="9" height="10" viewBox="0 0 9 10"><path d="M1 0.5 V9.5 L8 5 Z" fill="#888"/></svg>
<div class="t " style="left:34.0px;top:684.8px;font-size:12.0px;color:#111;">Batch Tot...</div>
<div class="t " style="left:34.0px;top:706.8px;font-size:12.0px;color:#111;">Your Totals</div>
<div class="t " style="left:34.0px;top:729.3px;font-size:12.0px;color:#111;">Difference</div>
<div class="r" style="left:915px;top:584px;width:1px;height:165px;background:#b0b0b0;"></div>
</div>
<div class="t " style="left:29.0px;top:756.9px;font-size:10.75px;color:#222;font-style:italic;">Total Employees (by File#) in this batch: 1</div>
<div class="t " style="left:29.0px;top:794.8px;font-size:14.4px;color:#3a51b2;">Change Saving Options</div>
<div class="r" style="left:525px;top:785px;width:88px;height:37px;border:1.5px solid #3a51b2;border-radius:7px;box-sizing:border-box;background:#fff"></div>
<div class="t " style="left:269.0px;width:600px;text-align:center;top:797.6px;font-size:12.2px;color:#2f46a8;font-weight:700;">CANCEL</div>
<div class="r" style="left:622px;top:785px;width:67px;height:37px;border:1.5px solid #3a51b2;border-radius:7px;box-sizing:border-box;background:#fff"></div>
<div class="t " style="left:356.0px;width:600px;text-align:center;top:797.6px;font-size:12.2px;color:#2f46a8;font-weight:700;">SAVE</div>
<div class="r" style="left:698px;top:785px;width:133px;height:37px;border:1.5px solid #c4c4c4;border-radius:7px;box-sizing:border-box;background:#fff"></div>
<div class="t " style="left:466.0px;width:600px;text-align:center;top:797.7px;font-size:12.1px;color:#bdbdbd;font-weight:700;">AUTO BALANCE</div>
<div class="r" style="left:840px;top:785px;width:72px;height:37px;background:#3349a5;border-radius:7px"></div>
<div class="t " style="left:578.0px;width:600px;text-align:center;top:797.3px;font-size:12.6px;color:#fff;font-weight:700;">DONE</div>
<div class="r" style="left:908px;top:798px;width:36px;height:128px;background:#4a6cc4;border-radius:8px 0 0 8px"></div>
<svg class="r" style="left:917px;top:807px;" width="18" height="18" viewBox="0 0 18 18"><circle cx="9" cy="9" r="8.5" fill="#fff"/><text x="4.6" y="14" font-family="Liberation Sans" font-weight="700" font-size="13" fill="#4a6cc4">?</text></svg>
<div class="t" style="left:873px;top:865px;width:104px;height:16px;line-height:16px;font-size:13.5px;font-weight:700;color:#fff;text-align:center;transform:rotate(90deg)">Need Help?</div>
<div class="r" style="left:944px;top:121px;width:15px;height:895px;background:#ffffff;"></div>
<svg class="r" style="left:946px;top:125px;" width="11" height="9" viewBox="0 0 11 9"><path d="M5.5 1 L10 8 H1 Z" fill="#888"/></svg>
<div class="r" style="left:947px;top:139px;width:9px;height:618px;background:#888;border-radius:5px"></div>
<svg class="r" style="left:946px;top:1004px;" width="11" height="9" viewBox="0 0 11 9"><path d="M1 1 H10 L5.5 8 Z" fill="#888"/></svg>
<div class="r" style="left:1px;top:1015px;width:958px;height:16px;background:#f8f8f8;"></div>
<svg class="r" style="left:4px;top:1018px;" width="10" height="11" viewBox="0 0 10 11"><path d="M9 1 V10 L1.5 5.5 Z" fill="#888"/></svg>
<div class="r" style="left:19px;top:1019px;width:756px;height:9px;background:#8a8a8a;border-radius:5px"></div>
<svg class="r" style="left:931px;top:1018px;" width="10" height="11" viewBox="0 0 10 11"><path d="M1 1 V10 L8.5 5.5 Z" fill="#888"/></svg>
<div class="r" style="left:925px;top:0px;width:35px;height:1031px;background:linear-gradient(to right, rgba(0,0,0,0), rgba(0,0,0,0.03) 40%, rgba(0,0,0,0.20))"></div>
<div class="r" style="left:0px;top:0px;width:960px;height:1px;background:#6b6b6b;"></div>
<div class="r" style="left:0px;top:0px;width:1px;height:1031px;background:#6b6b6b;"></div>
<div class="r" style="left:0px;top:1030px;width:960px;height:2px;background:#6b6b6b;"></div>
<div class="r" style="left:960px;top:0px;width:960px;height:1032px;background:#f0f0f0;"></div>
<svg class="r" style="left:976px;top:16px;" width="17" height="18" viewBox="0 0 17 18"><rect x="3" y="1" width="14" height="16" rx="1.5" fill="#1f6b35"/><rect x="10" y="1" width="7" height="5.5" fill="#b4e66e"/><rect x="3" y="1" width="7" height="5.5" fill="#6ccc60"/><rect x="0.5" y="5" width="10" height="10" rx="1.5" fill="#185c37"/><text x="2.2" y="13.3" font-family="Liberation Sans" font-weight="700" font-size="9" fill="#fff">x</text></svg>
<div class="t " style="left:1009.0px;top:19.5px;font-size:11.2px;color:#222;">AutoSave</div>
<div class="r" style="left:1064px;top:14px;width:45px;height:20px;background:#107c41;border-radius:10px"></div>
<div class="t " style="left:1070.0px;top:19.1px;font-size:12.2px;color:#fff;">On</div>
<div class="r" style="left:1091px;top:17px;width:14px;height:14px;background:#fff;border-radius:7px"></div>
<svg class="r" style="left:1121px;top:16px;" width="19" height="18" viewBox="0 0 19 18"><path d="M1 1 H13 L15 3 V8 M9 16 H1 V1" stroke="#444" stroke-width="1.1" fill="none"/><path d="M4 1 V5 H11 V1" stroke="#444" stroke-width="1.1" fill="none"/><path d="M10.5 11 A3.6 3.6 0 0 1 17 10 M17.5 13 A3.6 3.6 0 0 1 11 14" stroke="#1f9a4a" stroke-width="1.5" fill="none"/><path d="M17.5 7.5 V10.5 H14.5 Z M10.5 16.5 V13.5 H13.5 Z" fill="#1f9a4a"/></svg>
<svg class="r" style="left:1151px;top:16px;" width="16" height="18" viewBox="0 0 16 18"><path d="M2 2 V7 H7" stroke="#333" stroke-width="1.2" fill="none"/><path d="M2.5 7 A6 6 0 1 1 8 17" stroke="#333" stroke-width="1.2" fill="none"/></svg>
<svg class="r" style="left:1173px;top:22px;" width="6" height="4" viewBox="0 0 6 4"><path d="M0.7 0.7 L3.0 3.2 L5.3 0.7" stroke="#333" stroke-width="1.3" fill="none"/></svg>
<svg class="r" style="left:1190px;top:16px;" width="16" height="18" viewBox="0 0 16 18"><path d="M14 2 V7 H9" stroke="#aaa" stroke-width="1.2" fill="none"/><path d="M13.5 7 A6 6 0 1 0 8 17" stroke="#aaa" stroke-width="1.2" fill="none"/></svg>
<svg class="r" style="left:1212px;top:22px;" width="6" height="4" viewBox="0 0 6 4"><path d="M0.7 0.7 L3.0 3.2 L5.3 0.7" stroke="#bbb" stroke-width="1.2" fill="none"/></svg>
<svg class="r" style="left:1231px;top:19px;" width="10" height="10" viewBox="0 0 10 10"><path d="M1 1.5 H9" stroke="#333" stroke-width="1.2"/><path d="M1.5 4.5 L5 8 L8.5 4.5" stroke="#333" stroke-width="1.3" fill="none"/></svg>
<div class="t " style="left:1266.0px;top:20.0px;font-size:11.8px;color:#222;">Master - Company Payroll Reminders</div>
<svg class="r" style="left:1470px;top:18px;" width="15" height="14" viewBox="0 0 15 14"><circle cx="5" cy="8" r="2.5" stroke="#444" stroke-width="1" fill="none"/><path d="M1 13.5 A4 4 0 0 1 9 13.5" stroke="#444" stroke-width="1" fill="none"/><circle cx="10.5" cy="3.5" r="2.3" stroke="#444" stroke-width="1" fill="none"/><path d="M9 7.3 A4 4 0 0 1 14.5 10" stroke="#444" stroke-width="1" fill="none"/></svg>
<div class="r" style="left:1493px;top:25px;width:3px;height:3px;background:#333;"></div>
<div class="t " style="left:1502.0px;top:20.6px;font-size:11.0px;color:#222;">Saved</div>
<svg class="r" style="left:1537px;top:21px;" width="11" height="6" viewBox="0 0 11 6"><path d="M0.7 0.7 L5.5 5.2 L10.3 0.7" stroke="#333" stroke-width="1.2" fill="none"/></svg>
<svg class="r" style="left:1685px;top:16px;" width="18" height="18" viewBox="0 0 18 18"><circle cx="11" cy="6.5" r="5" stroke="#333" stroke-width="1.2" fill="none"/><path d="M7.3 10 L1.5 16" stroke="#333" stroke-width="1.3"/></svg>
<svg class="r" style="left:1738px;top:12px;" width="26" height="26" viewBox="0 0 26 26"><defs><clipPath id="av"><circle cx="13" cy="13" r="12"/></clipPath></defs><g clip-path="url(#av)"><rect width="26" height="26" fill="#dcd6d0"/><ellipse cx="13" cy="12" rx="8.5" ry="10" fill="#b08850"/><ellipse cx="13" cy="11.5" rx="4.5" ry="6" fill="#e6c0a0"/><path d="M2 27 Q4 19 13 19 Q22 19 24 27 Z" fill="#1c1c24"/></g></svg>
<div class="r" style="left:1794px;top:25px;width:10px;height:1px;background:#333;"></div>
<div class="r" style="left:1841px;top:20px;width:9px;height:9px;border:1.1px solid #333;border-radius:1.5px"></div>
<svg class="r" style="left:1889px;top:19px;" width="11" height="11" viewBox="0 0 11 11"><path d="M0.5 0.5 L10.5 10.5 M10.5 0.5 L0.5 10.5" stroke="#333" stroke-width="1.1"/></svg>
<div class="t " style="left:1514.0px;top:58.1px;font-size:12.85px;color:#222;">Automate</div>
<div class="t " style="left:1591.0px;top:57.9px;font-size:13.1px;color:#222;">Developer</div>
<div class="t " style="left:1670.0px;top:58.0px;font-size:12.9px;color:#222;">MACRO</div>
<div class="t " style="left:1734.0px;top:58.0px;font-size:13.0px;color:#222;">Help</div>
<div class="t " style="left:1781.0px;top:57.8px;font-size:13.2px;color:#222;">Acrobat</div>
<div class="r" style="left:1843px;top:52px;width:24px;height:24px;border:1px solid #8a8a8a;border-radius:4px;box-sizing:border-box;background:#fff"></div>
<svg class="r" style="left:1848px;top:57px;" width="14" height="14" viewBox="0 0 14 14"><path d="M1.5 2 H12.5 V9.5 H6 L3.5 12 V9.5 H1.5 Z" stroke="#333" stroke-width="1" fill="none"/></svg>
<div class="r" style="left:1875px;top:52px;width:32px;height:24px;background:#107c41;border-radius:4px"></div>
<svg class="r" style="left:1880px;top:56px;" width="16" height="16" viewBox="0 0 16 16"><path d="M2 7 V14 H13 V11" stroke="#fff" stroke-width="1.1" fill="none"/><path d="M5 11 Q6 5 12 5 V2.5 L15.5 6 L12 9.5 V7 Q8 7 5 11 Z" stroke="#fff" stroke-width="1" fill="none"/></svg>
<svg class="r" style="left:1897px;top:62px;" width="7" height="4" viewBox="0 0 7 4"><path d="M0.7 0.7 L3.5 3.2 L6.3 0.7" stroke="#fff" stroke-width="1.3" fill="none"/></svg>
<div class="r" style="left:969px;top:79px;width:942px;height:130px;background:#fff;border-radius:8px;box-shadow:0 1px 2px rgba(0,0,0,0.18)"></div>
<div class="r" style="left:969px;top:179px;width:942px;height:30px;background:#fdf6d8;border-radius:0 0 8px 8px"></div>
<div class="r" style="left:1042px;top:84px;width:1px;height:89px;background:#d4d4d4;"></div>
<div class="r" style="left:1097px;top:84px;width:1px;height:89px;background:#d4d4d4;"></div>
<div class="r" style="left:1171px;top:84px;width:1px;height:89px;background:#d4d4d4;"></div>
<div class="r" style="left:1233px;top:84px;width:1px;height:89px;background:#d4d4d4;"></div>
<div class="r" style="left:1418px;top:84px;width:1px;height:89px;background:#d4d4d4;"></div>
<div class="r" style="left:1473px;top:84px;width:1px;height:89px;background:#d4d4d4;"></div>
<div class="r" style="left:1527px;top:84px;width:1px;height:89px;background:#d4d4d4;"></div>
<div class="r" style="left:1601px;top:84px;width:1px;height:89px;background:#d4d4d4;"></div>
<div class="r" style="left:1664px;top:84px;width:1px;height:89px;background:#d4d4d4;"></div>
<div class="r" style="left:1752px;top:84px;width:1px;height:89px;background:#d4d4d4;"></div>
<div class="r" style="left:1823px;top:84px;width:1px;height:89px;background:#d4d4d4;"></div>
<svg class="r" style="left:995px;top:85px;" width="30" height="33" viewBox="0 0 30 33"><rect x="1" y="4" width="20" height="23" fill="#fdf4dd" stroke="#e07c00" stroke-width="1.5"/><path d="M6 4 Q6 1 11 1 Q16 1 16 4 V6.5 H6 Z" fill="#fff" stroke="#666" stroke-width="1.1"/><rect x="13" y="12.5" width="14" height="18" fill="#fafafa" stroke="#333" stroke-width="1.2"/></svg>
<div class="t " style="left:707.0px;width:600px;text-align:center;top:120.7px;font-size:12.1px;color:#222;">Clipboard</div>
<svg class="r" style="left:1003px;top:141px;" width="7" height="4" viewBox="0 0 7 4"><path d="M0.7 0.7 L3.5 3.2 L6.3 0.7" stroke="#333" stroke-width="1.2" fill="none"/></svg>
<svg class="r" style="left:1053px;top:85px;" width="33" height="32" viewBox="0 0 33 32"><path d="M8.5 21 L16 1.5 L23.5 21 M11 14.5 H21" stroke="#333" stroke-width="1.3" fill="none"/><rect x="1" y="23" width="32" height="8" fill="#222"/></svg>
<div class="t " style="left:770.0px;width:600px;text-align:center;top:120.5px;font-size:12.3px;color:#222;">Font</div>
<svg class="r" style="left:1066px;top:141px;" width="7" height="4" viewBox="0 0 7 4"><path d="M0.7 0.7 L3.5 3.2 L6.3 0.7" stroke="#333" stroke-width="1.2" fill="none"/></svg>
<svg class="r" style="left:1119px;top:88px;" width="30" height="25" viewBox="0 0 30 25"><path d="M1 1.5 H29 M5 6.5 H25 M1 11.5 H29 M5 16.5 H25 M1 21.5 H29" stroke="#333" stroke-width="1.1"/></svg>
<div class="t " style="left:834.0px;width:600px;text-align:center;top:120.5px;font-size:12.3px;color:#222;">Alignment</div>
<svg class="r" style="left:1130px;top:141px;" width="7" height="4" viewBox="0 0 7 4"><path d="M0.7 0.7 L3.5 3.2 L6.3 0.7" stroke="#333" stroke-width="1.2" fill="none"/></svg>
<svg class="r" style="left:1188px;top:87px;" width="27" height="28" viewBox="0 0 27 28"><circle cx="6.5" cy="7" r="4.8" stroke="#333" stroke-width="1.3" fill="none"/><circle cx="20" cy="20.5" r="4.8" stroke="#333" stroke-width="1.3" fill="none"/><path d="M20.5 1.5 L7 26" stroke="#333" stroke-width="1.3"/></svg>
<div class="t " style="left:902.0px;width:600px;text-align:center;top:120.5px;font-size:12.3px;color:#222;">Number</div>
<svg class="r" style="left:1198px;top:141px;" width="7" height="4" viewBox="0 0 7 4"><path d="M0.7 0.7 L3.5 3.2 L6.3 0.7" stroke="#333" stroke-width="1.2" fill="none"/></svg>
<svg class="r" style="left:1245px;top:88px;" width="18" height="16" viewBox="0 0 18 16"><rect x="0.5" y="0.5" width="16" height="14" stroke="#333" stroke-width="1" fill="#fff"/><path d="M0.5 5.2 H16.5 M0.5 9.8 H16.5 M4.5 0.5 V14.5 M8.5 0.5 V14.5 M12.5 0.5 V14.5" stroke="#555" stroke-width="0.7"/><rect x="4.5" y="0.5" width="8" height="4.7" fill="#f58c9a" stroke="#d8202a" stroke-width="0.8"/><rect x="4.5" y="9.8" width="8" height="4.7" fill="#f58c9a" stroke="#d8202a" stroke-width="0.8"/><rect x="4.5" y="5.2" width="4" height="4.6" fill="#9cc8f0" stroke="#1a6ad0" stroke-width="0.8"/></svg>
<div class="t " style="left:1266.0px;top:90.5px;font-size:12.3px;color:#222;">Conditional Formatting</div>
<svg class="r" style="left:1393px;top:94px;" width="7" height="4" viewBox="0 0 7 4"><path d="M0.7 0.7 L3.5 3.2 L6.3 0.7" stroke="#333" stroke-width="1.1" fill="none"/></svg>
<svg class="r" style="left:1245px;top:114px;" width="18" height="16" viewBox="0 0 18 16"><path d="M0.5 14.5 V0.5 H16.5 V9 M0.5 5 H16.5 M4.5 0.5 V14.5 M9 0.5 V9 M13 0.5 V9" stroke="#444" stroke-width="0.8" fill="none"/><rect x="4.5" y="5" width="12" height="10" fill="#9cc8f0"/><path d="M4.5 15 H16.5 V10" stroke="#1a6ad0" stroke-width="1" fill="none"/><path d="M16 5 L9 12" stroke="#444" stroke-width="2"/><path d="M9 12 Q6 13 5.5 16 Q8 16 10 13.5 Z" fill="#1a6ad0"/></svg>
<div class="t " style="left:1266.0px;top:117.1px;font-size:11.7px;color:#222;">Format as Table</div>
<svg class="r" style="left:1352px;top:120px;" width="7" height="4" viewBox="0 0 7 4"><path d="M0.7 0.7 L3.5 3.2 L6.3 0.7" stroke="#333" stroke-width="1.1" fill="none"/></svg>
<svg class="r" style="left:1245px;top:140px;" width="18" height="16" viewBox="0 0 18 16"><rect x="0.5" y="0.5" width="16" height="14" stroke="#444" stroke-width="0.9" fill="#fff"/><rect x="3" y="3" width="11" height="9" fill="#9cc8f0"/><path d="M0.5 3 H16.5" stroke="#444" stroke-width="0.7"/><path d="M16 4 L9 12" stroke="#444" stroke-width="2"/><path d="M9 12 Q6 13 5.5 16 Q8 16 10 13.5 Z" fill="#1a6ad0"/></svg>
<div class="t " style="left:1266.0px;top:143.3px;font-size:11.4px;color:#222;">Cell Styles</div>
<svg class="r" style="left:1323px;top:146px;" width="7" height="4" viewBox="0 0 7 4"><path d="M0.7 0.7 L3.5 3.2 L6.3 0.7" stroke="#333" stroke-width="1.1" fill="none"/></svg>
<div class="t " style="left:1025.0px;width:600px;text-align:center;top:163.0px;font-size:11.8px;color:#333;">Styles</div>
<svg class="r" style="left:1430px;top:83px;" width="30" height="30" viewBox="0 0 30 30"><path d="M7.5 1.5 H21.5 M7.5 0 V3 M21.5 0 V3" stroke="#1a6ad0" stroke-width="1"/><rect x="1" y="5" width="27" height="22" stroke="#333" stroke-width="1" fill="#fff"/><path d="M1 12.3 H28 M1 19.6 H28 M7.7 5 V27 M21.3 5 V27" stroke="#555" stroke-width="0.8"/><rect x="7.7" y="12.3" width="13.6" height="7.3" fill="#8cc0ee" stroke="#1a6ad0" stroke-width="1"/></svg>
<div class="t " style="left:1144.0px;width:600px;text-align:center;top:120.5px;font-size:12.3px;color:#222;">Cells</div>
<svg class="r" style="left:1441px;top:141px;" width="7" height="4" viewBox="0 0 7 4"><path d="M0.7 0.7 L3.5 3.2 L6.3 0.7" stroke="#333" stroke-width="1.2" fill="none"/></svg>
<svg class="r" style="left:1484px;top:85px;" width="32" height="32" viewBox="0 0 32 32"><circle cx="19.5" cy="10.5" r="9.5" stroke="#333" stroke-width="1.3" fill="none"/><path d="M13 17.5 L1.5 29.5" stroke="#333" stroke-width="1.3"/></svg>
<div class="t " style="left:1199.0px;width:600px;text-align:center;top:120.5px;font-size:12.3px;color:#222;">Editing</div>
<svg class="r" style="left:1496px;top:141px;" width="7" height="4" viewBox="0 0 7 4"><path d="M0.7 0.7 L3.5 3.2 L6.3 0.7" stroke="#333" stroke-width="1.2" fill="none"/></svg>
<svg class="r" style="left:1618px;top:87px;" width="30" height="30" viewBox="0 0 30 30"><rect x="1" y="1" width="28" height="28" stroke="#d9461c" stroke-width="1.3" fill="none"/><rect x="4.5" y="4.5" width="9" height="9" stroke="#d9461c" stroke-width="1.2" fill="none"/><rect x="16.5" y="4.5" width="9" height="9" stroke="#d9461c" stroke-width="1.2" fill="none"/><rect x="4.5" y="16.5" width="9" height="9" stroke="#d9461c" stroke-width="1.2" fill="none"/><rect x="16.5" y="16.5" width="9" height="9" stroke="#d9461c" stroke-width="1.2" fill="none"/></svg>
<div class="t " style="left:1333.0px;width:600px;text-align:center;top:122.5px;font-size:12.4px;color:#222;">Add-ins</div>
<svg class="r" style="left:1677px;top:87px;" width="16" height="16" viewBox="0 0 16 16"><path d="M4 2 Q8 0 11 2 L14 6 Q16 10 12 14 Q8 16 5 14 L2 10 Q0 6 4 2 Z" fill="#9a6cf0"/><path d="M4 2 Q8 0 11 2 L8 8 Z" fill="#2ab0f0"/><path d="M12 14 Q8 16 5 14 L8 8 Z" fill="#f06ab0"/><path d="M14 6 Q16 10 12 14 L9 9 Z" fill="#f0a040"/></svg>
<div class="t " style="left:1697.0px;top:90.3px;font-size:12.6px;color:#222;">Copilot</div>
<svg class="r" style="left:1778px;top:87px;" width="27" height="30" viewBox="0 0 27 30"><path d="M2 2 H15 L20 7 V15 M11 26 H2 Z" stroke="#2a6ae0" stroke-width="1.4" fill="none"/><path d="M2 2 V26" stroke="#2a6ae0" stroke-width="1.4"/><path d="M6 16 Q9 9 10 6 Q11 12 16 15" stroke="#2a6ae0" stroke-width="1" fill="none"/><path d="M15 24 L22 17 M18 21 Q14 26 13 24 Q11 22 15 19 M19 20 Q24 15 22 14 Q20 12 17 16" stroke="#2a6ae0" stroke-width="1.4" fill="none"/></svg>
<div class="t " style="left:1488.0px;width:600px;text-align:center;top:121.5px;font-size:12.4px;color:#222;">Adobe</div>
<div class="t " style="left:1482.0px;width:600px;text-align:center;top:137.5px;font-size:12.4px;color:#222;">Acrobat</div>
<svg class="r" style="left:1806px;top:142px;" width="6" height="4" viewBox="0 0 6 4"><path d="M0.7 0.7 L3.0 3.2 L5.3 0.7" stroke="#333" stroke-width="1.1" fill="none"/></svg>
<svg class="r" style="left:1848px;top:88px;" width="14" height="28" viewBox="0 0 14 28"><circle cx="14" cy="14" r="13" fill="#1faa3a"/><circle cx="14" cy="14" r="6" stroke="#fff" stroke-width="2.5" fill="none"/></svg>
<div class="t " style="left:1834.0px;top:122.5px;font-size:12.4px;color:#222;">Sprea</div>
<div class="t " style="left:1854.0px;top:137.5px;font-size:12.4px;color:#222;">S</div>
<div class="t " style="left:1830.0px;top:163.0px;font-size:11.8px;color:#333;">Sprea</div>
<div class="r" style="left:1859px;top:79px;width:24px;height:99px;background:#fff;border:1px solid #8a8a8a;box-sizing:border-box"></div>
<svg class="r" style="left:1867px;top:124px;" width="6" height="8" viewBox="0 0 6 8"><path d="M1 1 L4.5 4 L1 7" stroke="#333" stroke-width="1.1" fill="none"/></svg>
<svg class="r" style="left:980px;top:185px;" width="18" height="18" viewBox="0 0 18 18"><circle cx="9" cy="9" r="7.8" stroke="#2a7ad6" stroke-width="1.4" fill="none"/><rect x="8.1" y="7.5" width="1.8" height="6" fill="#2a7ad6"/><circle cx="9" cy="5" r="1.1" fill="#2a7ad6"/></svg>
<div class="t " style="left:1005.0px;top:190.7px;font-size:11.0px;color:#222;-webkit-text-stroke:0.25px #222;">SLOW WORKBOOK?</div>
<div class="t " style="left:1124.0px;top:189.8px;font-size:12.05px;color:#222;">97% of your workbook has unused formatting and metadata that can be optimized to improve performance.</div>
<div class="r" style="left:1705px;top:182px;width:124px;height:25px;background:#fff;border:1px solid #8a8a8a;border-radius:4px;box-sizing:border-box"></div>
<div class="t " style="left:1467.0px;width:600px;text-align:center;top:190.1px;font-size:11.7px;color:#222;">Check Performance</div>
<svg class="r" style="left:1889px;top:189px;" width="11" height="11" viewBox="0 0 11 11"><path d="M1 1 L10 10 M10 1 L1 10" stroke="#333" stroke-width="1.2"/></svg>
<div class="r" style="left:970px;top:218px;width:100px;height:25px;background:#fff;border:1px solid #dcdcdc;border-radius:5px;box-sizing:border-box"></div>
<div class="t " style="left:977.0px;top:226.4px;font-size:11.3px;color:#222;">K95</div>
<svg class="r" style="left:1054px;top:228px;" width="11" height="6" viewBox="0 0 11 6"><path d="M0.7 0.7 L5.5 5.2 L10.3 0.7" stroke="#333" stroke-width="1.3" fill="none"/></svg>
<svg class="r" style="left:1079px;top:225px;" width="5" height="12" viewBox="0 0 5 12"><circle cx="2.5" cy="1.5" r="1.2" fill="#333"/><circle cx="2.5" cy="6" r="1.2" fill="#333"/><circle cx="2.5" cy="10.5" r="1.2" fill="#333"/></svg>
<div class="r" style="left:1092px;top:218px;width:84px;height:25px;background:#fff;border:1px solid #dcdcdc;border-radius:5px;box-sizing:border-box"></div>
<svg class="r" style="left:1097px;top:224px;" width="13" height="13" viewBox="0 0 13 13"><path d="M1 1 L12 12 M12 1 L1 12" stroke="#aaa" stroke-width="1.1"/></svg>
<svg class="r" style="left:1119px;top:225px;" width="17" height="12" viewBox="0 0 17 12"><path d="M1 6 L6 11 L16 1" stroke="#aaa" stroke-width="1.1" fill="none"/></svg>
<div class="t " style="left:1145.0px;top:224.2px;font-size:15px;color:#222;font-style:italic;font-family:'Liberation Serif',serif;-webkit-text-stroke:0.3px #222;">fx</div>
<svg class="r" style="left:1165px;top:227px;" width="9" height="6" viewBox="0 0 9 6"><path d="M0.7 0.7 L4.5 5.2 L8.3 0.7" stroke="#555" stroke-width="1.1" fill="none"/></svg>
<div class="r" style="left:1181px;top:218px;width:730px;height:25px;background:#fff;border:1px solid #dcdcdc;border-radius:5px;box-sizing:border-box"></div>
<svg class="r" style="left:1895px;top:227px;" width="11" height="6" viewBox="0 0 11 6"><path d="M0.7 0.7 L5.5 5.2 L10.3 0.7" stroke="#333" stroke-width="1.3" fill="none"/></svg>
<div class="r" style="left:961px;top:248px;width:937px;height:20px;background:#f0f0f0;"></div>
<svg class="r" style="left:973px;top:254px;" width="11" height="11" viewBox="0 0 11 11"><path d="M10 0.5 V10 H0.5 Z" fill="#c8c8c8"/></svg>
<div class="r" style="left:986px;top:248px;width:1px;height:20px;background:#d0d0d0;"></div>
<div class="t " style="left:715.5px;width:600px;text-align:center;top:252.6px;font-size:11.7px;color:#333;">F</div>
<div class="r" style="left:1044px;top:249px;width:1px;height:18px;background:#d0d0d0;"></div>
<div class="t " style="left:773.4px;width:600px;text-align:center;top:252.6px;font-size:11.7px;color:#333;">G</div>
<div class="r" style="left:1102px;top:249px;width:1px;height:18px;background:#d0d0d0;"></div>
<div class="t " style="left:831.4px;width:600px;text-align:center;top:252.6px;font-size:11.7px;color:#333;">H</div>
<div class="r" style="left:1160px;top:249px;width:1px;height:18px;background:#d0d0d0;"></div>
<div class="t " style="left:889.3px;width:600px;text-align:center;top:252.6px;font-size:11.7px;color:#333;">I</div>
<div class="r" style="left:1218px;top:249px;width:1px;height:18px;background:#d0d0d0;"></div>
<div class="t " style="left:947.3px;width:600px;text-align:center;top:252.6px;font-size:11.7px;color:#333;">J</div>
<div class="r" style="left:1276px;top:248px;width:58px;height:20px;background:#d8d8d8;"></div>
<div class="r" style="left:1276px;top:265px;width:58px;height:2px;background:#107c41;"></div>
<div class="r" style="left:1276px;top:249px;width:1px;height:18px;background:#d0d0d0;"></div>
<div class="t " style="left:1005.2px;width:600px;text-align:center;top:252.6px;font-size:11.7px;color:#1e6b3c;">K</div>
<div class="r" style="left:1334px;top:249px;width:1px;height:18px;background:#d0d0d0;"></div>
<div class="t " style="left:1063.2px;width:600px;text-align:center;top:252.6px;font-size:11.7px;color:#333;">L</div>
<div class="r" style="left:1392px;top:249px;width:1px;height:18px;background:#d0d0d0;"></div>
<div class="t " style="left:1121.1px;width:600px;text-align:center;top:252.6px;font-size:11.7px;color:#333;">M</div>
<div class="r" style="left:1450px;top:249px;width:1px;height:18px;background:#d0d0d0;"></div>
<div class="t " style="left:1179.1px;width:600px;text-align:center;top:252.6px;font-size:11.7px;color:#333;">N</div>
<div class="r" style="left:1508px;top:249px;width:1px;height:18px;background:#d0d0d0;"></div>
<div class="t " style="left:1237.0px;width:600px;text-align:center;top:252.6px;font-size:11.7px;color:#333;">O</div>
<div class="r" style="left:1566px;top:249px;width:1px;height:18px;background:#d0d0d0;"></div>
<div class="t " style="left:1295.0px;width:600px;text-align:center;top:252.6px;font-size:11.7px;color:#333;">P</div>
<div class="r" style="left:1624px;top:249px;width:1px;height:18px;background:#d0d0d0;"></div>
<div class="t " style="left:1352.9px;width:600px;text-align:center;top:252.6px;font-size:11.7px;color:#333;">Q</div>
<div class="r" style="left:1682px;top:249px;width:1px;height:18px;background:#d0d0d0;"></div>
<div class="t " style="left:1410.9px;width:600px;text-align:center;top:252.6px;font-size:11.7px;color:#333;">R</div>
<div class="r" style="left:1740px;top:249px;width:1px;height:18px;background:#d0d0d0;"></div>
<div class="t " style="left:1468.8px;width:600px;text-align:center;top:252.6px;font-size:11.7px;color:#333;">S</div>
<div class="r" style="left:1798px;top:249px;width:1px;height:18px;background:#d0d0d0;"></div>
<div class="t " style="left:1526.8px;width:600px;text-align:center;top:252.6px;font-size:11.7px;color:#333;">T</div>
<div class="r" style="left:1856px;top:249px;width:1px;height:18px;background:#d0d0d0;"></div>
<div class="t " style="left:1584.7px;width:600px;text-align:center;top:252.6px;font-size:11.7px;color:#333;">U</div>
<div class="r" style="left:961px;top:267px;width:937px;height:1px;background:#9f9f9f;"></div>
<div class="r" style="left:987px;top:268px;width:911px;height:709px;background:#ffffff;"></div>
<div class="r" style="left:961px;top:268px;width:25px;height:709px;background:#f0f0f0;"></div>
<div class="r" style="left:986px;top:268px;width:1px;height:709px;background:#9f9f9f;"></div>
<div class="r" style="left:961px;top:285px;width:25px;height:1px;background:#dadada;"></div>
<div class="t " style="left:674.0px;width:600px;text-align:center;top:272.1px;font-size:11.6px;color:#333;">1</div>
<div class="r" style="left:961px;top:303px;width:25px;height:1px;background:#dadada;"></div>
<div class="t " style="left:674.0px;width:600px;text-align:center;top:290.1px;font-size:11.6px;color:#333;">2</div>
<div class="r" style="left:961px;top:321px;width:25px;height:1px;background:#dadada;"></div>
<div class="t " style="left:674.0px;width:600px;text-align:center;top:308.1px;font-size:11.6px;color:#333;">3</div>
<div class="r" style="left:961px;top:339px;width:25px;height:1px;background:#dadada;"></div>
<div class="t " style="left:674.0px;width:600px;text-align:center;top:326.1px;font-size:11.6px;color:#333;">4</div>
<div class="r" style="left:961px;top:357px;width:25px;height:1px;background:#dadada;"></div>
<div class="t " style="left:674.0px;width:600px;text-align:center;top:344.1px;font-size:11.6px;color:#333;">5</div>
<div class="r" style="left:961px;top:377px;width:25px;height:1px;background:#dadada;"></div>
<div class="t " style="left:674.0px;width:600px;text-align:center;top:364.1px;font-size:11.6px;color:#1a1aff;">75</div>
<div class="r" style="left:961px;top:413px;width:25px;height:1px;background:#dadada;"></div>
<div class="t " style="left:674.0px;width:600px;text-align:center;top:400.1px;font-size:11.6px;color:#1a1aff;">76</div>
<div class="r" style="left:961px;top:449px;width:25px;height:1px;background:#dadada;"></div>
<div class="t " style="left:674.0px;width:600px;text-align:center;top:436.1px;font-size:11.6px;color:#1a1aff;">77</div>
<div class="r" style="left:961px;top:467px;width:25px;height:1px;background:#dadada;"></div>
<div class="t " style="left:674.0px;width:600px;text-align:center;top:454.1px;font-size:11.6px;color:#1a1aff;">78</div>
<div class="r" style="left:961px;top:503px;width:25px;height:1px;background:#dadada;"></div>
<div class="t " style="left:674.0px;width:600px;text-align:center;top:490.1px;font-size:11.6px;color:#1a1aff;">79</div>
<div class="r" style="left:961px;top:539px;width:25px;height:1px;background:#dadada;"></div>
<div class="t " style="left:674.0px;width:600px;text-align:center;top:526.1px;font-size:11.6px;color:#1a1aff;">80</div>
<div class="r" style="left:961px;top:575px;width:25px;height:1px;background:#dadada;"></div>
<div class="t " style="left:674.0px;width:600px;text-align:center;top:562.1px;font-size:11.6px;color:#1a1aff;">81</div>
<div class="r" style="left:961px;top:611px;width:25px;height:1px;background:#dadada;"></div>
<div class="t " style="left:674.0px;width:600px;text-align:center;top:598.1px;font-size:11.6px;color:#1a1aff;">82</div>
<div class="r" style="left:961px;top:629px;width:25px;height:1px;background:#dadada;"></div>
<div class="t " style="left:674.0px;width:600px;text-align:center;top:616.1px;font-size:11.6px;color:#1a1aff;">83</div>
<div class="r" style="left:961px;top:647px;width:25px;height:1px;background:#dadada;"></div>
<div class="t " style="left:674.0px;width:600px;text-align:center;top:634.1px;font-size:11.6px;color:#1a1aff;">84</div>
<div class="r" style="left:961px;top:665px;width:25px;height:1px;background:#dadada;"></div>
<div class="t " style="left:674.0px;width:600px;text-align:center;top:652.1px;font-size:11.6px;color:#1a1aff;">85</div>
<div class="r" style="left:961px;top:683px;width:25px;height:1px;background:#dadada;"></div>
<div class="t " style="left:674.0px;width:600px;text-align:center;top:670.1px;font-size:11.6px;color:#1a1aff;">86</div>
<div class="r" style="left:961px;top:701px;width:25px;height:1px;background:#dadada;"></div>
<div class="t " style="left:674.0px;width:600px;text-align:center;top:688.1px;font-size:11.6px;color:#1a1aff;">87</div>
<div class="r" style="left:961px;top:719px;width:25px;height:1px;background:#dadada;"></div>
<div class="t " style="left:674.0px;width:600px;text-align:center;top:706.1px;font-size:11.6px;color:#1a1aff;">88</div>
<div class="r" style="left:961px;top:737px;width:25px;height:1px;background:#dadada;"></div>
<div class="t " style="left:674.0px;width:600px;text-align:center;top:724.1px;font-size:11.6px;color:#1a1aff;">89</div>
<div class="r" style="left:961px;top:755px;width:25px;height:1px;background:#dadada;"></div>
<div class="t " style="left:674.0px;width:600px;text-align:center;top:742.1px;font-size:11.6px;color:#1a1aff;">90</div>
<div class="r" style="left:961px;top:773px;width:25px;height:1px;background:#dadada;"></div>
<div class="t " style="left:674.0px;width:600px;text-align:center;top:760.1px;font-size:11.6px;color:#1a1aff;">91</div>
<div class="r" style="left:961px;top:791px;width:25px;height:1px;background:#dadada;"></div>
<div class="t " style="left:674.0px;width:600px;text-align:center;top:778.1px;font-size:11.6px;color:#1a1aff;">92</div>
<div class="r" style="left:961px;top:809px;width:25px;height:1px;background:#dadada;"></div>
<div class="t " style="left:674.0px;width:600px;text-align:center;top:796.1px;font-size:11.6px;color:#333;">93</div>
<div class="r" style="left:961px;top:827px;width:25px;height:1px;background:#dadada;"></div>
<div class="t " style="left:674.0px;width:600px;text-align:center;top:814.1px;font-size:11.6px;color:#333;">94</div>
<div class="r" style="left:961px;top:828px;width:25px;height:18px;background:#d8d8d8;"></div>
<div class="r" style="left:984px;top:828px;width:2px;height:18px;background:#107c41;"></div>
<div class="r" style="left:961px;top:845px;width:25px;height:1px;background:#dadada;"></div>
<div class="t " style="left:674.0px;width:600px;text-align:center;top:832.1px;font-size:11.6px;color:#1e6b3c;">95</div>
<div class="r" style="left:961px;top:863px;width:25px;height:1px;background:#dadada;"></div>
<div class="t " style="left:674.0px;width:600px;text-align:center;top:850.1px;font-size:11.6px;color:#333;">96</div>
<div class="r" style="left:961px;top:881px;width:25px;height:1px;background:#dadada;"></div>
<div class="t " style="left:674.0px;width:600px;text-align:center;top:868.1px;font-size:11.6px;color:#333;">97</div>
<div class="r" style="left:961px;top:899px;width:25px;height:1px;background:#dadada;"></div>
<div class="t " style="left:674.0px;width:600px;text-align:center;top:886.1px;font-size:11.6px;color:#333;">98</div>
<div class="r" style="left:961px;top:917px;width:25px;height:1px;background:#dadada;"></div>
<div class="t " style="left:674.0px;width:600px;text-align:center;top:904.1px;font-size:11.6px;color:#333;">99</div>
<div class="r" style="left:961px;top:935px;width:25px;height:1px;background:#dadada;"></div>
<div class="t " style="left:674.0px;width:600px;text-align:center;top:922.1px;font-size:11.6px;color:#333;">100</div>
<div class="r" style="left:961px;top:953px;width:25px;height:1px;background:#dadada;"></div>
<div class="t " style="left:674.0px;width:600px;text-align:center;top:940.1px;font-size:11.6px;color:#333;">101</div>
<div class="r" style="left:961px;top:971px;width:25px;height:1px;background:#dadada;"></div>
<div class="t " style="left:674.0px;width:600px;text-align:center;top:958.1px;font-size:11.6px;color:#333;">102</div>
<div class="r" style="left:961px;top:359px;width:937px;height:1px;background:#8c8c8c;"></div>
<div class="r" style="left:961px;top:360px;width:937px;height:1px;background:#d0d0d0;"></div>
<div class="r" style="left:1897px;top:268px;width:1px;height:709px;background:#cfcfcf;"></div>
<div class="r" style="left:1899px;top:250px;width:18px;height:725px;background:#ececec;border-radius:9px"></div>
<div class="t " style="left:1511.0px;top:553.1px;font-size:11.6px;color:#111;">Effective D Action</div>
<div class="t " style="left:1047.0px;top:652.5px;font-size:11.2px;color:#111;letter-spacing:-0.15px;">ACC - Accident Ins</div>
<div class="t " style="left:612.0px;width:600px;text-align:right;top:652.0px;font-size:11.8px;color:#111;">7.63</div>
<div class="t " style="left:1511.0px;top:652.3px;font-size:11.4px;color:#111;">Yes</div>
<div class="t " style="left:1572.0px;top:652.8px;font-size:10.8px;color:#333;letter-spacing:-0.2px;">########</div>
<div class="t " style="left:1047.0px;top:670.5px;font-size:11.2px;color:#111;letter-spacing:-0.15px;">CRE - CRITICAL ILL EE</div>
<div class="t " style="left:612.0px;width:600px;text-align:right;top:670.0px;font-size:11.8px;color:#111;">5.19</div>
<div class="t " style="left:1511.0px;top:670.3px;font-size:11.4px;color:#111;">Yes</div>
<div class="t " style="left:1572.0px;top:670.8px;font-size:10.8px;color:#333;letter-spacing:-0.2px;">########</div>
<div class="t " style="left:1047.0px;top:688.5px;font-size:11.2px;color:#111;letter-spacing:-0.15px;">DEN - DEN PRE TAX</div>
<div class="t " style="left:612.0px;width:600px;text-align:right;top:688.0px;font-size:11.8px;color:#111;">9.94</div>
<div class="t " style="left:1511.0px;top:688.3px;font-size:11.4px;color:#111;">Yes</div>
<div class="t " style="left:1572.0px;top:688.8px;font-size:10.8px;color:#333;letter-spacing:-0.2px;">########</div>
<div class="t " style="left:1047.0px;top:706.5px;font-size:11.2px;color:#111;letter-spacing:-0.15px;">FSA - Flexible Spendi</div>
<div class="t " style="left:612.0px;width:600px;text-align:right;top:706.0px;font-size:11.8px;color:#111;">57.69</div>
<div class="t " style="left:1511.0px;top:706.3px;font-size:11.4px;color:#111;">Yes</div>
<div class="t " style="left:1572.0px;top:706.8px;font-size:10.8px;color:#333;letter-spacing:-0.2px;">########</div>
<div class="t " style="left:1047.0px;top:724.5px;font-size:11.2px;color:#111;letter-spacing:-0.15px;">LIC - LifeCH</div>
<div class="t " style="left:612.0px;width:600px;text-align:right;top:724.0px;font-size:11.8px;color:#111;">1.12</div>
<div class="t " style="left:1511.0px;top:724.3px;font-size:11.4px;color:#111;">Yes</div>
<div class="t " style="left:1572.0px;top:724.8px;font-size:10.8px;color:#333;letter-spacing:-0.2px;">########</div>
<div class="t " style="left:1047.0px;top:742.5px;font-size:11.2px;color:#111;letter-spacing:-0.15px;">LIF - LifeEE</div>
<div class="t " style="left:612.0px;width:600px;text-align:right;top:742.0px;font-size:11.8px;color:#111;">7.28</div>
<div class="t " style="left:1511.0px;top:742.3px;font-size:11.4px;color:#111;">Yes</div>
<div class="t " style="left:1572.0px;top:742.8px;font-size:10.8px;color:#333;letter-spacing:-0.2px;">########</div>
<div class="t " style="left:1047.0px;top:760.5px;font-size:11.2px;color:#111;letter-spacing:-0.15px;">MED - Health Insuranc</div>
<div class="t " style="left:612.0px;width:600px;text-align:right;top:760.0px;font-size:11.8px;color:#111;">24.52</div>
<div class="t " style="left:1511.0px;top:760.3px;font-size:11.4px;color:#111;">Yes</div>
<div class="t " style="left:1572.0px;top:760.8px;font-size:10.8px;color:#333;letter-spacing:-0.2px;">########</div>
<div class="t " style="left:1047.0px;top:778.5px;font-size:11.2px;color:#111;letter-spacing:-0.15px;">RTH - ROTH$</div>
<div class="t " style="left:612.0px;width:600px;text-align:right;top:778.0px;font-size:11.8px;color:#111;">25.00</div>
<div class="t " style="left:1572.0px;top:778.8px;font-size:10.8px;color:#333;letter-spacing:-0.2px;">########</div>
<div class="t " style="left:1047.0px;top:796.5px;font-size:11.2px;color:#111;letter-spacing:-0.15px;">STD - STD Post Tax</div>
<div class="t " style="left:612.0px;width:600px;text-align:right;top:796.0px;font-size:11.8px;color:#111;">27.66</div>
<div class="t " style="left:1511.0px;top:796.3px;font-size:11.4px;color:#111;">Yes</div>
<div class="t " style="left:1572.0px;top:796.8px;font-size:10.8px;color:#333;letter-spacing:-0.2px;">########</div>
<div class="t " style="left:1047.0px;top:814.5px;font-size:11.2px;color:#111;letter-spacing:-0.15px;">VIS - Vision Deductio</div>
<div class="t " style="left:612.0px;width:600px;text-align:right;top:814.0px;font-size:11.8px;color:#111;">2.05</div>
<div class="t " style="left:1511.0px;top:814.3px;font-size:11.4px;color:#111;">Yes</div>
<div class="t " style="left:1572.0px;top:814.8px;font-size:10.8px;color:#333;letter-spacing:-0.2px;">########</div>
<div class="r" style="left:1275px;top:827px;width:61px;height:20px;border:2px solid #107c41;box-sizing:border-box"></div>
<div class="r" style="left:1332px;top:843px;width:5px;height:5px;background:#107c41;"></div>
<div class="r" style="left:1331px;top:842px;width:1px;height:6px;background:#fff;"></div>
<div class="r" style="left:961px;top:977px;width:958px;height:32px;background:#f0f0f0;"></div>
<svg class="r" style="left:989px;top:986px;" width="8" height="12" viewBox="0 0 8 12"><path d="M6 1 L1.5 6 L6 11" stroke="#888" stroke-width="1.2" fill="none"/></svg>
<svg class="r" style="left:1020px;top:986px;" width="8" height="12" viewBox="0 0 8 12"><path d="M1.5 1 L6 6 L1.5 11" stroke="#333" stroke-width="1.2" fill="none"/></svg>
<div class="r" style="left:1077px;top:977px;width:118px;height:28px;background:#fff;border-radius:6px;box-shadow:0 1px 1px rgba(0,0,0,0.06)"></div>
<div class="t " style="left:836.0px;width:600px;text-align:center;top:984.3px;font-size:13.8px;color:#222;">CompOne (U4F)</div>
<div class="r" style="left:1085px;top:1000px;width:102px;height:2px;background:#107c41;"></div>
<div class="r" style="left:1199px;top:984px;width:1px;height:18px;background:#c8c8c8;"></div>
<div class="t " style="left:1213.0px;top:986.8px;font-size:13.2px;color:#222;">FDI (NR2-TXU)</div>
<div class="r" style="left:1318px;top:984px;width:1px;height:18px;background:#c8c8c8;"></div>
<div class="t " style="left:1332.0px;top:986.8px;font-size:13.2px;color:#222;">HAA (6Y7)</div>
<div class="r" style="left:1408px;top:984px;width:1px;height:18px;background:#c8c8c8;"></div>
<div class="t " style="left:1422.0px;top:986.8px;font-size:13.2px;color:#222;">IME (FJV)</div>
<div class="r" style="left:1492px;top:984px;width:1px;height:18px;background:#c8c8c8;"></div>
<div class="t " style="left:1506.0px;top:986.8px;font-size:13.2px;color:#222;">MAI (RPC)</div>
<div class="r" style="left:1582px;top:984px;width:1px;height:18px;background:#c8c8c8;"></div>
<div class="t " style="left:1596.0px;top:986.8px;font-size:13.2px;color:#222;">MAI (RES)</div>
<div class="r" style="left:1671px;top:984px;width:1px;height:18px;background:#c8c8c8;"></div>
<div class="t " style="left:1685.0px;top:986.8px;font-size:13.2px;color:#222;">Ri</div>
<svg class="r" style="left:1704px;top:990px;" width="14" height="6" viewBox="0 0 14 6"><circle cx="2" cy="3" r="1.6" fill="#333"/><circle cx="7" cy="3" r="1.6" fill="#333"/><circle cx="12" cy="3" r="1.6" fill="#333"/></svg>
<svg class="r" style="left:1736px;top:985px;" width="13" height="13" viewBox="0 0 13 13"><path d="M6.5 1 V12 M1 6.5 H12" stroke="#333" stroke-width="1.2"/></svg>
<svg class="r" style="left:1773px;top:988px;" width="4" height="12" viewBox="0 0 4 12"><circle cx="2" cy="1.5" r="1.2" fill="#333"/><circle cx="2" cy="6" r="1.2" fill="#333"/><circle cx="2" cy="10.5" r="1.2" fill="#333"/></svg>
<div class="r" style="left:1791px;top:984px;width:105px;height:17px;background:#ebebeb;border-radius:8px"></div>
<div class="r" style="left:1851px;top:988px;width:28px;height:9px;background:#707070;border-radius:5px"></div>
<svg class="r" style="left:1884px;top:987px;" width="9" height="11" viewBox="0 0 9 11"><path d="M1 1 V10 L8 5.5 Z" fill="#222"/></svg>
<div class="r" style="left:961px;top:1009px;width:958px;height:22px;background:#f3f3f3;"></div>
<div class="t " style="left:973.0px;top:1014.7px;font-size:10.9px;color:#333;">Ready</div>
<svg class="r" style="left:1054px;top:1012px;" width="16" height="16" viewBox="0 0 16 16"><circle cx="7" cy="2.5" r="1.8" stroke="#333" stroke-width="1" fill="none"/><path d="M1 6 H13 M7 5 V10 L3 15 M7 10 L10 13" stroke="#333" stroke-width="1.1" fill="none"/><path d="M10 11 L15 16 M15 11 L10 16" stroke="#333" stroke-width="1.1"/></svg>
<div class="t " style="left:1073.0px;top:1015.0px;font-size:10.6px;color:#222;font-weight:700;">Accessibility: Investigate</div>
<div class="r" style="left:1608px;top:1009px;width:40px;height:22px;background:#dedede;"></div>
<svg class="r" style="left:1620px;top:1013px;" width="14" height="14" viewBox="0 0 14 14"><rect x="0.5" y="0.5" width="13" height="13" stroke="#222" stroke-width="1" fill="none"/><path d="M0.5 4.5 H13.5 M0.5 9.5 H13.5 M4.5 0.5 V13.5 M9.5 0.5 V13.5" stroke="#222" stroke-width="1"/></svg>
<svg class="r" style="left:1660px;top:1013px;" width="15" height="14" viewBox="0 0 15 14"><rect x="0.5" y="0.5" width="14" height="13" stroke="#222" stroke-width="1" fill="none"/><rect x="3.5" y="3" width="8" height="8" stroke="#222" stroke-width="0.9" fill="none"/><path d="M5 5.5 H10 M5 7.5 H10 M5 9.3 H10" stroke="#222" stroke-width="0.8"/></svg>
<svg class="r" style="left:1700px;top:1013px;" width="15" height="14" viewBox="0 0 15 14"><rect x="0.5" y="0.5" width="14" height="13" stroke="#222" stroke-width="1" fill="none"/><path d="M4.5 0.5 V7 H10 V0.5" stroke="#222" stroke-width="1" fill="none"/></svg>
<div class="r" style="left:1734px;top:1019px;width:10px;height:1px;background:#333;"></div>
<div class="r" style="left:1747px;top:1019px;width:99px;height:1px;background:#777;"></div>
<div class="r" style="left:1789px;top:1015px;width:5px;height:10px;background:#555;"></div>
<div class="r" style="left:1797px;top:1016px;width:1px;height:7px;background:#555;"></div>
<svg class="r" style="left:1851px;top:1014px;" width="10" height="10" viewBox="0 0 10 10"><path d="M5 0 V10 M0 5 H10" stroke="#333" stroke-width="1.1"/></svg>
<div class="t " style="left:1873.0px;top:1014.6px;font-size:11.0px;color:#333;">90%</div>
<div class="r" style="left:960px;top:0px;width:1px;height:1032px;background:#0d7a3c;"></div>
<div class="r" style="left:960px;top:0px;width:960px;height:1px;background:#0d7a3c;"></div>
<div class="r" style="left:1919px;top:0px;width:1px;height:1032px;background:#0d7a3c;"></div>
<div class="r" style="left:960px;top:1030px;width:960px;height:2px;background:#0d7a3c;"></div>
<div class="r" style="left:0px;top:1032px;width:1920px;height:48px;background:#ededed;"></div>
<div class="r" style="left:0px;top:1032px;width:1920px;height:1px;background:#e2e2e2;"></div>
<svg class="r" style="left:20px;top:1037px;" width="30" height="32" viewBox="0 0 30 32"><defs><linearGradient id="sun" x1="0" y1="0" x2="0" y2="1"><stop offset="0" stop-color="#f7c02a"/><stop offset="1" stop-color="#f07a10"/></linearGradient><linearGradient id="cld" x1="0" y1="0" x2="0" y2="1"><stop offset="0" stop-color="#cfe3fb"/><stop offset="1" stop-color="#7fb0ef"/></linearGradient></defs><circle cx="11" cy="19" r="10" fill="url(#sun)"/><path d="M4 30 Q1 30 1.5 26 Q2 23 6 23 Q7 18 13 18.5 Q18 19 19 23 Q23 23 23 27 Q23 30 20 30 Z" fill="url(#cld)"/><circle cx="19" cy="9" r="8" fill="#c42b1c"/><text x="16" y="13.5" font-family="Liberation Sans" font-size="11" fill="#fff">1</text></svg>
<div class="t " style="left:50.0px;top:1042.1px;font-size:11.6px;color:#1a1a1a;">36°F</div>
<div class="t " style="left:50.0px;top:1058.0px;font-size:11.8px;color:#555;">Partly sunny</div>
<svg class="r" style="left:551px;top:1045px;" width="24" height="24" viewBox="0 0 24 24"><defs><linearGradient id="wg" x1="0" y1="0" x2="1" y2="1"><stop offset="0" stop-color="#3fc3f5"/><stop offset="1" stop-color="#1470d8"/></linearGradient></defs><rect x="0" y="0" width="11.3" height="11.3" fill="url(#wg)"/><rect x="12.7" y="0" width="11.3" height="11.3" fill="url(#wg)"/><rect x="0" y="12.7" width="11.3" height="11.3" fill="url(#wg)"/><rect x="12.7" y="12.7" width="11.3" height="11.3" fill="url(#wg)"/></svg>
<div class="r" style="left:588px;top:1041px;width:219px;height:32px;background:#f9f9f9;border:1px solid #dedede;border-radius:16px;box-sizing:border-box"></div>
<svg class="r" style="left:598px;top:1048px;" width="17" height="17" viewBox="0 0 17 17"><circle cx="7" cy="7" r="5.5" stroke="#222" stroke-width="1.7" fill="none"/><path d="M11 11 L15.5 15.5" stroke="#222" stroke-width="2"/></svg>
<div class="t " style="left:624.0px;top:1051.0px;font-size:12.9px;color:#555;">Search</div>
<svg class="r" style="left:819px;top:1045px;" width="25" height="23" viewBox="0 0 25 23"><rect x="8" y="0" width="16" height="16" rx="2" fill="#f4f4f4" stroke="#ddd" stroke-width="0.8"/><rect x="0" y="7" width="16" height="16" rx="2" fill="#222"/><rect x="8" y="7" width="8" height="9" fill="#bbb"/></svg>
<svg class="r" style="left:862px;top:1044px;" width="26" height="23" viewBox="0 0 26 23"><path d="M1 3 Q1 1 3 1 H9 L11 3 H23 Q25 3 25 5 V21 Q25 23 23 23 H3 Q1 23 1 21 Z" fill="#f6b82a"/><rect x="1" y="6" width="24" height="17" rx="2" fill="#fcd35a"/><rect x="7" y="15" width="12" height="4" rx="1" fill="#1a7ad8"/></svg>
<svg class="r" style="left:906px;top:1044px;" width="27" height="25" viewBox="0 0 27 25"><defs><linearGradient id="eg" x1="0" y1="0" x2="1" y2="1"><stop offset="0" stop-color="#35c1f1"/><stop offset="0.6" stop-color="#1b8ad8"/><stop offset="1" stop-color="#66e070"/></linearGradient></defs><path d="M13 1 A12 12 0 0 1 25 13 Q25 18 19 18 H9 Q10 23 17 23 A12 12 0 0 1 1 13 A12 12 0 0 1 13 1 Z" fill="url(#eg)"/><rect x="1" y="13" width="12" height="9" rx="1.5" fill="#e08a20"/><rect x="5" y="11" width="4" height="3" fill="none" stroke="#a05a10" stroke-width="1.2"/></svg>
<svg class="r" style="left:950px;top:1037px;" width="32" height="32" viewBox="0 0 32 32"><circle cx="16" cy="11" r="3.3" fill="#8b8cf0"/><rect x="12" y="15" width="14" height="14" rx="5" fill="#6a6ee0"/><rect x="1" y="17" width="13" height="13" rx="2" fill="#4b53bc"/><text x="4.2" y="27.5" font-family="Liberation Sans" font-weight="700" font-size="10" fill="#fff">T</text><circle cx="23" cy="9" r="8" fill="#c42b1c"/><text x="20" y="13.5" font-family="Liberation Sans" font-size="11" fill="#fff">1</text></svg>
<svg class="r" style="left:995px;top:1044px;" width="25" height="25" viewBox="0 0 25 25"><path d="M2 2 L19 1 V17 L2 16 Z" fill="#2046b0"/><path d="M4 4 L17 3.5 V15 L4 14 Z" fill="#5a86e8"/><path d="M6 17 V20 H15 V17" fill="#aaa"/><circle cx="19" cy="19" r="5.5" fill="#ccc" stroke="#777" stroke-width="0.8"/><path d="M16.5 20 L21.5 18" stroke="#2a9a3a" stroke-width="1.5"/></svg>
<svg class="r" style="left:1039px;top:1044px;" width="25" height="25" viewBox="0 0 25 25"><circle cx="12.5" cy="12.5" r="11" stroke="#1561b8" stroke-width="2.2" fill="none"/><path d="M18 8 A7 7 0 1 0 18 17" stroke="#1561b8" stroke-width="3" fill="none"/><rect x="10" y="11" width="10" height="3" fill="#1561b8"/></svg>
<svg class="r" style="left:1083px;top:1044px;" width="25" height="25" viewBox="0 0 25 25"><circle cx="12.5" cy="12.5" r="12" fill="#db4437"/><path d="M12.5 12.5 L2.1 6.5 A12 12 0 0 0 12.5 24.5 Z" fill="#0f9d58"/><path d="M12.5 12.5 L12.5 24.5 A12 12 0 0 0 22.9 6.5 Z" fill="#fbc02d"/><circle cx="12.5" cy="12.5" r="5.5" fill="#fff"/><circle cx="12.5" cy="12.5" r="4.3" fill="#3a7be8"/></svg>
<svg class="r" style="left:1126px;top:1044px;" width="25" height="24" viewBox="0 0 25 24"><path d="M6 5 L16 1 L24 5 V19 Q24 22 21 22 H8 Q6 22 6 19 Z" fill="#1a8ae0"/><path d="M6 9 L24 5 V19 Q24 22 21 22 H8 Z" fill="#36b0f0"/><rect x="0" y="9" width="12" height="12" rx="2" fill="#0e5cb8"/><circle cx="6" cy="15" r="3" stroke="#fff" stroke-width="1.6" fill="none"/></svg>
<svg class="r" style="left:1170px;top:1044px;" width="23" height="24" viewBox="0 0 23 24"><rect x="5" y="0" width="18" height="22" rx="2" fill="#c35ce0"/><rect x="12" y="8" width="11" height="14" fill="#9a3ac0"/><rect x="0" y="10" width="11" height="11" rx="1.5" fill="#7a1fb0"/><text x="2.3" y="19" font-family="Liberation Sans" font-weight="700" font-size="9" fill="#fff">N</text></svg>
<svg class="r" style="left:1216px;top:1045px;" width="22" height="22" viewBox="0 0 22 22"><rect x="0" y="0" width="22" height="22" rx="5" fill="#3a1e9a"/><circle cx="11" cy="11" r="5.5" stroke="#fff" stroke-width="2" fill="none"/><path d="M11 11 H16" stroke="#fff" stroke-width="2"/></svg>
<div class="r" style="left:1252px;top:1037px;width:38px;height:38px;background:#f8f8f8;border-radius:5px;box-shadow:0 0 0 1px rgba(0,0,0,0.04)"></div>
<svg class="r" style="left:1258px;top:1044px;" width="23" height="24" viewBox="0 0 23 24"><rect x="5" y="0" width="18" height="22" rx="2" fill="#1e8a48"/><rect x="14" y="0" width="9" height="7" fill="#5fd27a"/><rect x="5" y="0" width="9" height="7" fill="#36b05a"/><rect x="14" y="14" width="9" height="8" fill="#185c37"/><rect x="0" y="9" width="11" height="11" rx="1.5" fill="#107c41"/><text x="2.5" y="18" font-family="Liberation Sans" font-weight="700" font-size="9" fill="#fff">X</text></svg>
<div class="r" style="left:1263px;top:1072px;width:16px;height:3px;background:#0a6fd0;border-radius:2px"></div>
<svg class="r" style="left:1306px;top:1044px;" width="19" height="24" viewBox="0 0 19 24"><rect x="0" y="0" width="19" height="24" rx="2" fill="#5a6470"/><rect x="2" y="2" width="15" height="5" fill="#48c8f0"/><path d="M2.5 10 H6.5 M8 10 H11.5 M13 10 H16.5 M2.5 14.5 H6.5 M8 14.5 H11.5 M2.5 19 H6.5 M8 19 H11.5" stroke="#d8dde2" stroke-width="3"/><rect x="13" y="13" width="3.5" height="9" fill="#1a6ad0"/></svg>
<svg class="r" style="left:1347px;top:1044px;" width="24" height="24" viewBox="0 0 24 24"><rect x="0" y="0" width="24" height="24" rx="4" fill="#b30b00"/><path d="M5 18 Q9 12 12 5 Q13 11 19 14 Q12 14 5 18 Z" stroke="#fff" stroke-width="1.5" fill="none"/></svg>
<div class="r" style="left:872px;top:1072px;width:6px;height:3px;background:#888;border-radius:2px"></div>
<div class="r" style="left:916px;top:1072px;width:6px;height:3px;background:#888;border-radius:2px"></div>
<div class="r" style="left:960px;top:1072px;width:6px;height:3px;background:#888;border-radius:2px"></div>
<div class="r" style="left:1091px;top:1072px;width:6px;height:3px;background:#888;border-radius:2px"></div>
<div class="r" style="left:1136px;top:1072px;width:6px;height:3px;background:#888;border-radius:2px"></div>
<div class="r" style="left:1180px;top:1072px;width:6px;height:3px;background:#888;border-radius:2px"></div>
<div class="r" style="left:1224px;top:1072px;width:6px;height:3px;background:#888;border-radius:2px"></div>
<div class="r" style="left:1312px;top:1072px;width:6px;height:3px;background:#888;border-radius:2px"></div>
<div class="r" style="left:1356px;top:1072px;width:6px;height:3px;background:#888;border-radius:2px"></div>
<svg class="r" style="left:1699px;top:1051px;" width="12" height="8" viewBox="0 0 12 8"><path d="M1 7 L6 2 L11 7" stroke="#222" stroke-width="1.3" fill="none"/></svg>
<svg class="r" style="left:1730px;top:1047px;" width="14" height="18" viewBox="0 0 14 18"><rect x="4" y="1" width="6" height="10" rx="3" stroke="#2a5ac8" stroke-width="1.3" fill="none"/><path d="M1.5 8 A5.5 5.5 0 0 0 12.5 8 M7 13.5 V17" stroke="#2a5ac8" stroke-width="1.3" fill="none"/></svg>
<svg class="r" style="left:1760px;top:1049px;" width="18" height="14" viewBox="0 0 18 14"><path d="M1 5 A11 11 0 0 1 17 5 M3.5 7.8 A7.5 7.5 0 0 1 14.5 7.8 M6 10.5 A4 4 0 0 1 12 10.5" stroke="#222" stroke-width="1.3" fill="none"/><circle cx="9" cy="12.5" r="1.3" fill="#222"/></svg>
<svg class="r" style="left:1784px;top:1048px;" width="18" height="16" viewBox="0 0 18 16"><path d="M1.5 5.5 H5 L9 1.5 V14.5 L5 10.5 H1.5 Z" stroke="#222" stroke-width="1.1" fill="none"/><path d="M11.5 5 Q13 8 11.5 11 M13.5 3 Q16 8 13.5 13 M15.5 1.5 Q19 8 15.5 14.5" stroke="#222" stroke-width="1.1" fill="none"/></svg>
<svg class="r" style="left:1808px;top:1047px;" width="22" height="16" viewBox="0 0 22 16"><rect x="1" y="4" width="18" height="11" rx="2.5" stroke="#222" stroke-width="1.3" fill="#0f7a0f"/><rect x="19.5" y="7.5" width="2" height="4" fill="#222"/><path d="M11 1 L8 8 H11 L9.5 13 L13 6 H10 Z" fill="#222" stroke="#ededed" stroke-width="0.6"/></svg>
<div class="t " style="left:1300.0px;width:600px;text-align:right;top:1043.2px;font-size:11.5px;color:#1a1a1a;">12:19 PM</div>
<div class="t " style="left:1300.0px;width:600px;text-align:right;top:1059.0px;font-size:11.8px;color:#1a1a1a;">3/24/2026</div>
</body></html>
